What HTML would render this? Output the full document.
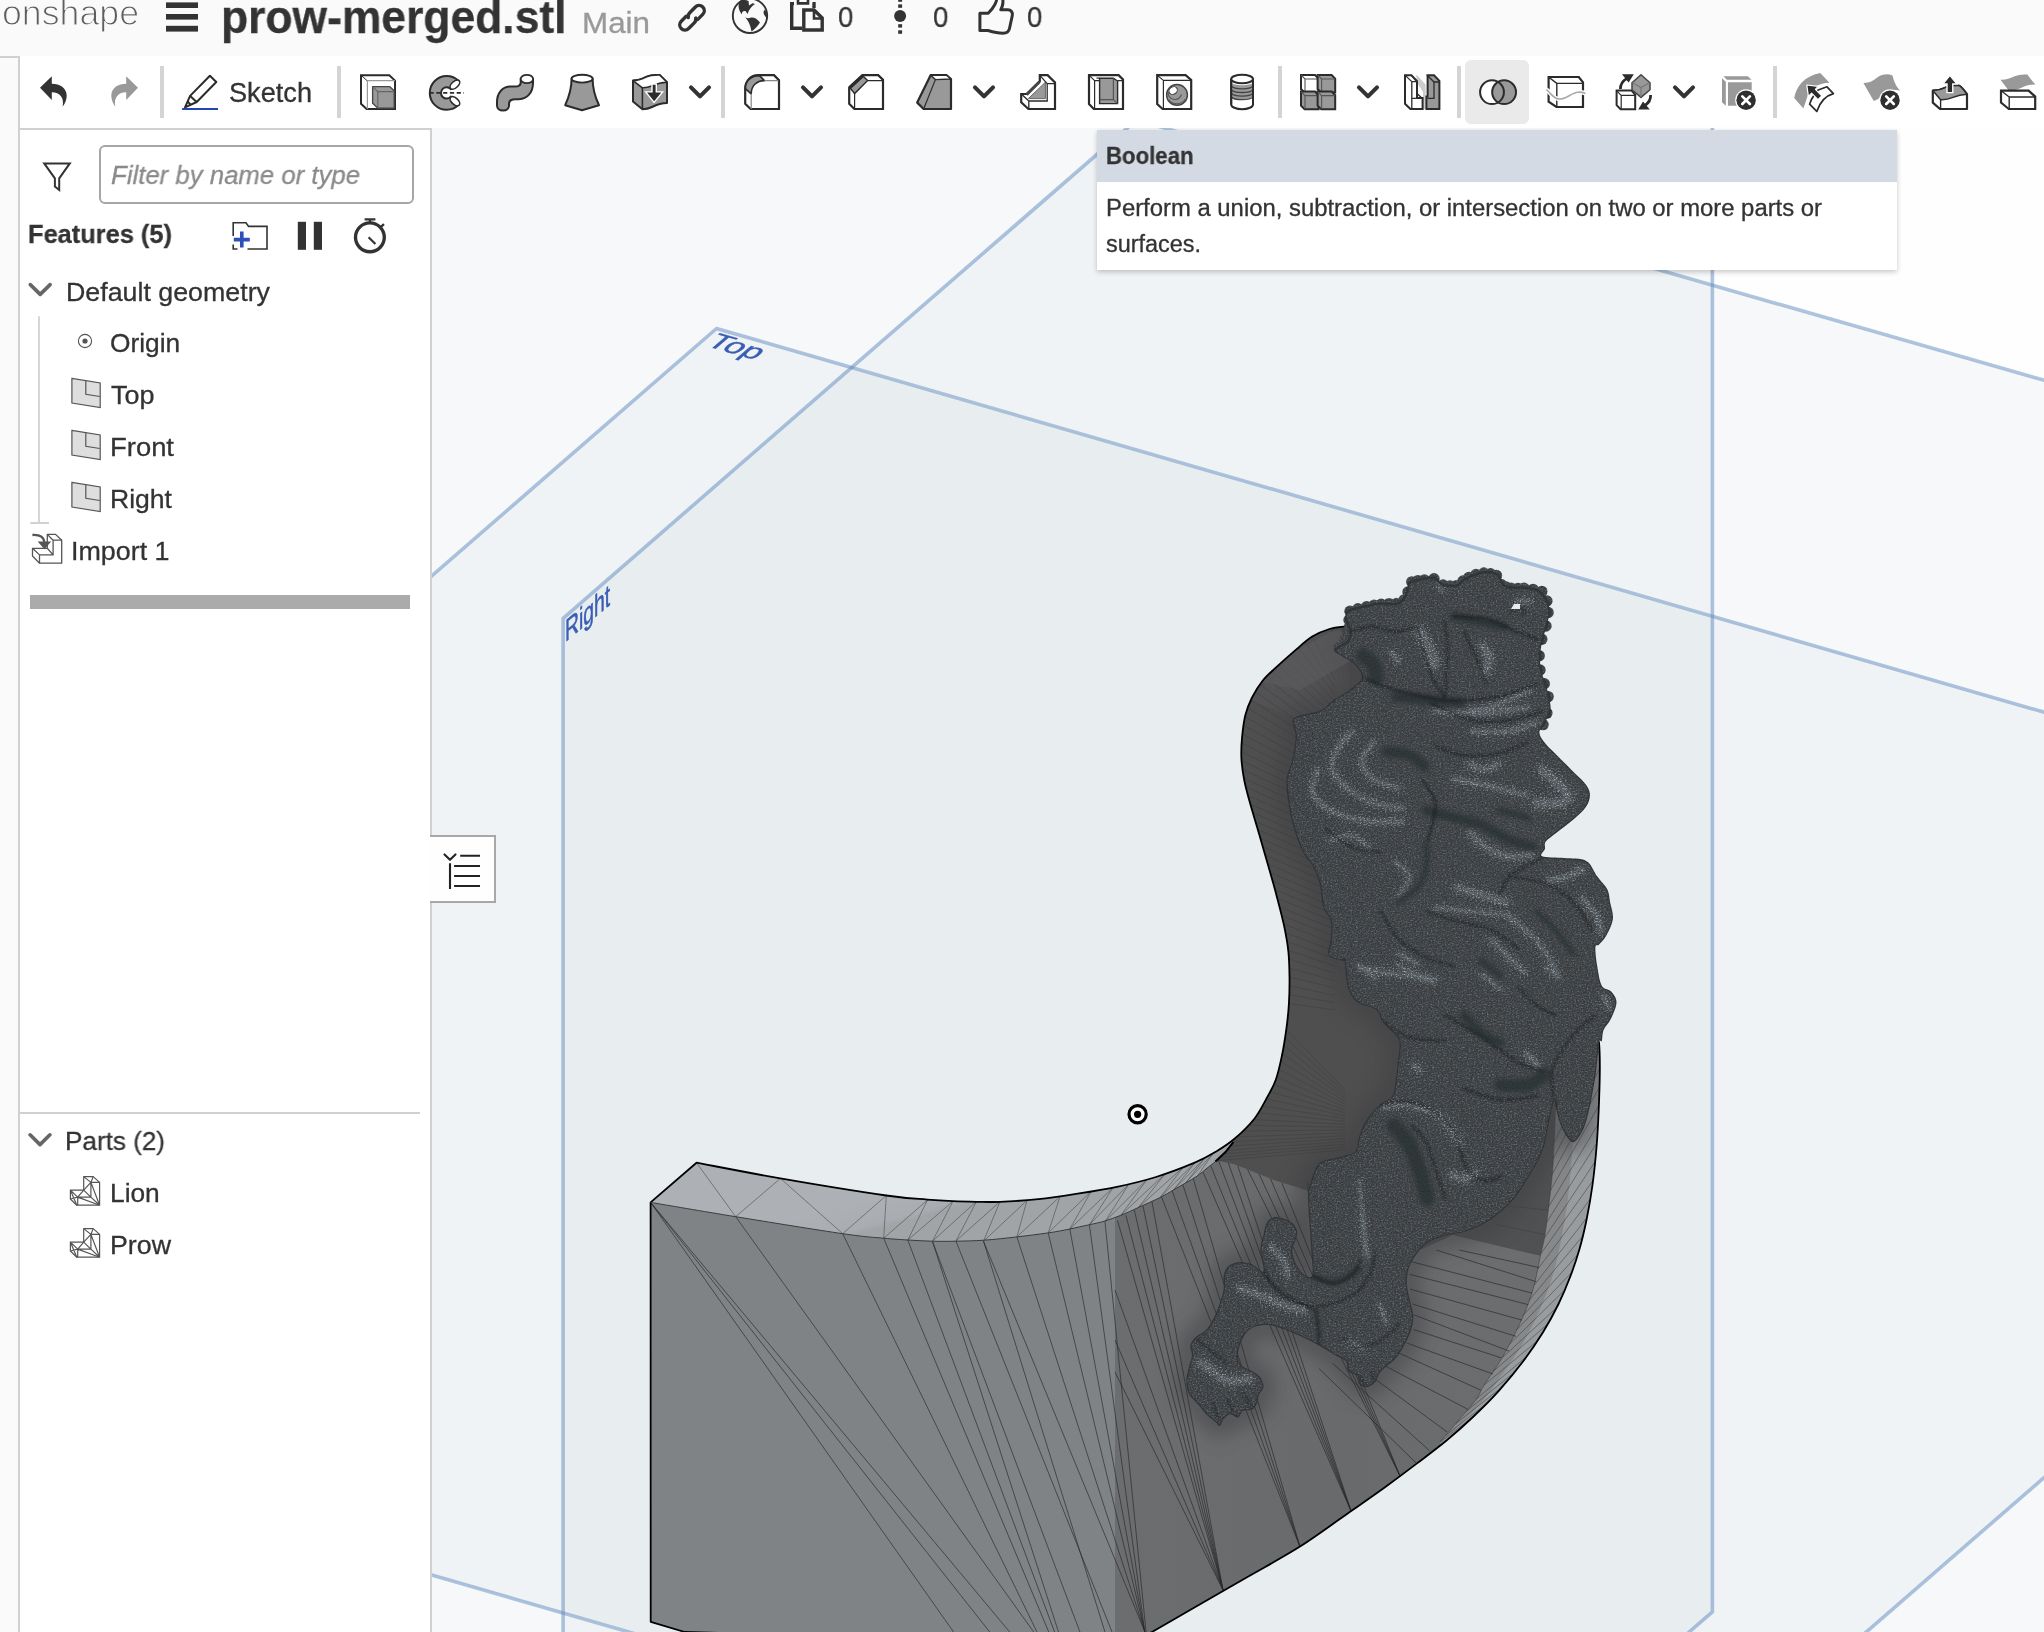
<!DOCTYPE html>
<html lang="en">
<head>
<meta charset="utf-8">
<title>prow-merged.stl - Onshape</title>
<style>
*{box-sizing:border-box;margin:0;padding:0}
html,body{width:2044px;height:1632px;overflow:hidden;background:#fafafa;font-family:"Liberation Sans",sans-serif}
.t{-webkit-text-stroke:0.3px currentColor;position:absolute;white-space:nowrap;transform-origin:0 0;display:block;will-change:transform}
svg{will-change:transform}
#hdr{position:absolute;left:0;top:0;width:2044px;height:56px;background:#fafafa;overflow:hidden}
#tb{position:absolute;left:0;top:56px;width:2044px;height:72px;background:#fff}
#tb .sep{position:absolute;top:10px;width:4px;height:52px;background:#d4d4d4}
#tb .hl{position:absolute;left:1465px;top:4px;width:64px;height:64px;border-radius:6px;background:#eaeaea}
#lstrip{position:absolute;left:0;top:56px;width:20px;height:1576px;background:#fafafa;border-right:2px solid #d0d0d0;border-top:2px solid #d0d0d0}
#panel{position:absolute;left:20px;top:128px;width:412px;height:1504px;background:#fff;border-top:2px solid #d0d0d0;border-right:2px solid #d0d0d0}
#canvas{position:absolute;left:432px;top:128px;width:1612px;height:1504px;background:#fefefe;overflow:hidden}
#canvas svg{position:absolute;left:-432px;top:-128px}
#tip{position:absolute;left:1097px;top:130px;width:800px;height:140px;background:#fff;box-shadow:0 2px 5px rgba(0,0,0,.22)}
#tip .h{position:absolute;left:0;top:0;width:800px;height:52px;background:#d3dae4}
#flt{position:absolute;left:98.5px;top:144.5px;width:315.5px;height:59px;border:2px solid #a6a6a6;border-radius:6px;background:#fff}
#bar{position:absolute;left:30px;top:595px;width:380px;height:14px;background:#ababab}
#psep{position:absolute;left:20px;top:1112px;width:400px;height:2px;background:#d0d0d0}
#tog{position:absolute;left:430px;top:835px;width:66px;height:68px;background:#fefefe;border:2px solid #a8a8a8;border-left:none}
.ic{position:absolute;overflow:visible}
</style>
</head>
<body>
<div id="canvas">
<svg width="2044" height="1632" viewBox="0 0 2044 1632">
<defs>
<linearGradient id="gtop" gradientUnits="userSpaceOnUse" x1="900" y1="1190" x2="915" y2="1245"><stop offset="0" stop-color="#adb1b6"/><stop offset="0.45" stop-color="#a9adb2"/><stop offset="0.55" stop-color="#a2a5a8"/><stop offset="1" stop-color="#a1a4a7"/></linearGradient>
<linearGradient id="gright" gradientUnits="userSpaceOnUse" x1="1115" y1="1300" x2="1560" y2="1300"><stop offset="0" stop-color="#6c6d6f"/><stop offset="0.5" stop-color="#696a6c"/><stop offset="1" stop-color="#6d6e70"/></linearGradient>
<filter id="b1" x="-30%" y="-30%" width="160%" height="160%"><feGaussianBlur stdDeviation="0.8"/></filter>
<filter id="b2" x="-30%" y="-30%" width="160%" height="160%"><feGaussianBlur stdDeviation="1.6"/></filter>
<filter id="b3" x="-30%" y="-30%" width="160%" height="160%"><feGaussianBlur stdDeviation="3"/></filter>
<filter id="b10" x="-30%" y="-30%" width="160%" height="160%"><feGaussianBlur stdDeviation="10"/></filter>
<filter id="b14" x="-30%" y="-30%" width="160%" height="160%"><feGaussianBlur stdDeviation="14"/></filter>
<filter id="nz" x="0" y="0" width="100%" height="100%" filterUnits="objectBoundingBox" color-interpolation-filters="sRGB"><feTurbulence type="fractalNoise" baseFrequency="0.55 0.7" numOctaves="2" seed="11" result="n"/><feColorMatrix in="n" type="matrix" values="0 0 0 0 0.68  0 0 0 0 0.72  0 0 0 0 0.75  3.0 0 0 0 -1.42"/></filter>
<filter id="nz2" x="0" y="0" width="100%" height="100%" filterUnits="objectBoundingBox" color-interpolation-filters="sRGB"><feTurbulence type="fractalNoise" baseFrequency="0.8" numOctaves="1" seed="4" result="n"/><feColorMatrix in="n" type="matrix" values="0 0 0 0 0.12  0 0 0 0 0.13  0 0 0 0 0.14  0 3.5 0 0 -1.55"/></filter>
<clipPath id="cprow"><path d="M650.6,1202.4L696.5,1162.7C710.5,1165.3 748.8,1172.9 780.4,1178.4C812.0,1183.9 861.8,1192.0 886.3,1195.5C910.8,1199.0 916.4,1198.6 927.5,1199.6C938.6,1200.5 944.8,1200.8 953.0,1201.2C961.2,1201.6 968.7,1201.7 976.5,1201.8C984.3,1201.9 989.7,1202.2 1000.0,1201.8C1010.3,1201.4 1025.5,1200.5 1038.4,1199.2C1051.3,1197.9 1064.5,1195.8 1077.6,1193.7C1090.7,1191.7 1103.8,1189.7 1116.9,1186.9C1130.0,1184.1 1142.9,1181.1 1156.0,1177.0C1169.1,1172.9 1185.1,1166.7 1195.3,1162.4C1205.5,1158.1 1210.5,1154.9 1217.0,1151.0C1223.5,1147.1 1228.3,1144.1 1234.5,1138.8C1240.7,1133.5 1248.8,1125.7 1254.0,1119.2C1259.2,1112.7 1262.3,1106.1 1265.9,1099.6C1269.5,1093.1 1273.0,1087.4 1275.7,1080.0C1278.4,1072.6 1280.2,1063.7 1282.0,1055.3C1283.8,1046.9 1285.1,1038.0 1286.3,1029.4C1287.5,1020.8 1288.4,1012.1 1288.9,1003.5C1289.4,994.9 1289.6,986.3 1289.5,977.7C1289.4,969.1 1289.3,960.4 1288.4,951.8C1287.5,943.2 1285.9,934.5 1284.1,925.9C1282.3,917.3 1279.5,907.0 1277.7,900.0C1275.9,893.0 1275.5,891.4 1273.3,883.6C1271.1,875.8 1267.4,862.8 1264.7,853.4C1262.0,844.0 1259.7,836.1 1257.2,827.5C1254.7,818.9 1251.8,809.5 1249.6,801.6C1247.4,793.7 1245.6,787.2 1244.2,780.0C1242.8,772.8 1241.8,765.6 1241.4,758.4C1241.1,751.2 1241.4,744.1 1242.1,736.9C1242.8,729.7 1243.7,721.8 1245.3,715.3C1246.9,708.8 1248.9,703.8 1251.8,698.0C1254.7,692.2 1258.6,685.8 1262.6,680.8C1266.5,675.8 1270.1,672.9 1275.5,667.9C1280.9,662.9 1288.8,655.8 1294.9,650.6C1301.0,645.4 1306.5,640.2 1312.2,636.6C1318.0,633.0 1323.7,630.7 1329.4,629.0C1335.2,627.3 1343.8,626.8 1346.7,626.4L1599.0,1042.4C1599.5,1047.4 1599.9,1061.3 1599.8,1072.6C1599.7,1083.9 1599.2,1097.9 1598.7,1110.0C1598.2,1122.1 1597.7,1132.5 1596.7,1145.0C1595.7,1157.5 1594.2,1172.5 1592.5,1185.0C1590.8,1197.5 1588.7,1209.3 1586.5,1220.0C1584.3,1230.7 1582.2,1239.7 1579.5,1249.0C1576.8,1258.3 1574.0,1266.8 1570.5,1276.0C1567.0,1285.2 1563.1,1294.6 1558.5,1304.0C1553.9,1313.4 1548.9,1322.7 1543.0,1332.3C1537.1,1341.9 1530.3,1351.8 1523.0,1361.5C1515.7,1371.2 1507.2,1381.4 1499.0,1390.6C1490.8,1399.8 1482.2,1408.2 1473.5,1416.5C1464.8,1424.8 1455.9,1432.7 1446.5,1440.5C1437.1,1448.3 1427.2,1455.6 1417.0,1463.4C1406.8,1471.2 1395.7,1479.5 1385.0,1487.2C1374.3,1494.9 1367.2,1499.8 1353.0,1509.7C1338.8,1519.6 1317.7,1535.3 1300.0,1546.6C1282.3,1557.8 1264.7,1567.0 1247.0,1577.2C1229.3,1587.4 1209.8,1598.7 1194.0,1607.8C1178.2,1616.9 1162.5,1626.0 1152.0,1632.0C1141.5,1638.0 1134.5,1642.1 1131.0,1644.1L684.8,1632.0L650.7,1621.8Z"/></clipPath>
<clipPath id="clion"><path d="M1345.5,614.7C1346.0,612.8 1346.5,611.5 1350.0,610.0C1353.5,608.5 1361.3,607.1 1366.5,606.0C1371.7,604.9 1376.0,603.9 1381.2,603.5C1386.5,603.1 1393.9,604.8 1398.0,603.5C1402.1,602.2 1404.2,598.8 1406.0,595.5C1407.8,592.2 1407.0,586.1 1409.0,583.5C1411.0,580.9 1413.8,580.9 1418.0,580.0C1422.2,579.1 1429.8,577.2 1434.0,578.0C1438.2,578.8 1439.3,583.2 1443.0,584.5C1446.7,585.8 1452.6,586.5 1456.4,585.5C1460.2,584.5 1461.4,580.7 1466.0,578.5C1470.6,576.3 1478.5,573.0 1483.8,572.3C1489.0,571.6 1494.3,572.5 1497.5,574.5C1500.7,576.5 1500.7,582.3 1503.0,584.5C1505.3,586.7 1507.7,587.2 1511.2,587.7C1514.7,588.2 1519.4,587.2 1524.0,587.7C1528.6,588.2 1534.9,588.4 1538.8,590.9C1542.7,593.4 1545.7,598.9 1547.5,602.5C1549.3,606.1 1549.8,608.2 1549.5,612.5C1549.2,616.8 1547.2,623.4 1546.0,628.0C1544.8,632.6 1543.5,635.3 1542.5,640.0C1541.5,644.7 1540.2,651.0 1540.0,656.0C1539.8,661.0 1540.1,665.3 1541.0,670.0C1541.9,674.7 1544.2,679.5 1545.5,684.0C1546.8,688.5 1548.2,692.5 1549.0,697.0C1549.8,701.5 1551.2,706.5 1550.4,711.0C1549.5,715.5 1545.8,720.2 1543.9,723.9C1542.1,727.6 1539.0,729.7 1539.4,733.1C1539.7,736.5 1542.9,740.4 1545.8,744.1C1548.7,747.8 1552.5,750.9 1556.8,755.2C1561.1,759.4 1566.9,765.3 1571.5,769.9C1576.1,774.5 1581.3,778.8 1584.4,782.7C1587.5,786.7 1589.6,789.8 1589.9,793.8C1590.2,797.8 1589.0,802.3 1586.2,806.6C1583.5,810.9 1578.3,815.2 1573.4,819.5C1568.5,823.8 1561.4,828.7 1556.8,832.4C1552.2,836.1 1547.8,838.8 1545.8,841.6C1543.8,844.3 1545.5,846.5 1544.9,848.9C1544.3,851.4 1538.9,854.7 1542.1,856.3C1545.3,857.8 1556.8,857.4 1564.2,858.1C1571.5,858.9 1580.7,857.8 1586.2,860.9C1591.8,863.9 1593.7,871.8 1597.3,876.5C1600.8,881.3 1605.2,885.1 1607.4,889.4C1609.5,893.7 1609.2,897.3 1610.1,902.2C1611.1,907.1 1613.5,913.3 1612.9,918.8C1612.3,924.3 1608.8,931.0 1606.5,935.3C1604.2,939.6 1600.9,942.5 1599.1,944.5C1597.3,946.5 1595.7,943.6 1595.4,947.3C1595.1,951.0 1596.2,960.2 1597.3,966.6C1598.3,973.0 1599.5,981.6 1601.8,985.7C1604.0,989.9 1608.5,988.5 1610.9,991.3C1613.4,994.0 1616.5,997.7 1616.5,1002.3C1616.5,1006.9 1613.1,1014.2 1610.9,1018.8C1608.8,1023.4 1605.1,1026.2 1603.6,1029.9C1602.1,1033.5 1602.5,1038.8 1601.8,1040.9C1601.0,1043.0 1599.9,1037.8 1599.0,1042.7C1598.1,1047.6 1597.3,1062.0 1596.2,1070.3C1595.2,1078.6 1593.8,1085.6 1592.6,1092.4C1591.3,1099.1 1590.4,1104.6 1588.9,1110.8C1587.3,1116.9 1585.8,1123.9 1583.4,1129.1C1580.9,1134.4 1576.9,1140.8 1574.2,1142.0C1571.4,1143.2 1569.3,1139.9 1566.8,1136.5C1564.4,1133.1 1561.3,1126.7 1559.5,1121.8C1557.6,1116.9 1556.7,1110.5 1555.8,1107.1C1554.9,1103.7 1555.2,1098.5 1553.9,1101.6C1552.7,1104.6 1550.0,1118.4 1548.4,1125.5C1546.9,1132.5 1546.6,1137.7 1544.8,1143.9C1542.9,1150.0 1540.5,1156.1 1537.4,1162.2C1534.3,1168.4 1530.0,1174.8 1526.4,1180.6C1522.7,1186.5 1519.6,1192.0 1515.3,1197.2C1511.0,1202.4 1506.1,1207.3 1500.6,1211.9C1495.1,1216.5 1488.4,1221.4 1482.2,1224.8C1476.1,1228.1 1470.0,1230.3 1463.9,1232.1C1457.7,1233.9 1451.6,1233.9 1445.5,1235.8C1439.3,1237.6 1432.2,1239.7 1427.1,1243.1C1422.0,1246.6 1418.0,1252.1 1414.9,1256.5C1411.8,1260.8 1409.9,1264.4 1408.5,1269.2C1407.2,1274.0 1406.7,1279.8 1406.9,1285.1C1407.2,1290.5 1409.1,1295.8 1410.1,1301.1C1411.2,1306.4 1413.3,1311.7 1413.3,1317.0C1413.3,1322.3 1412.0,1327.6 1410.1,1332.9C1408.3,1338.2 1404.8,1344.4 1402.2,1348.9C1399.5,1353.4 1396.8,1357.1 1394.2,1360.0C1391.5,1362.9 1388.6,1364.3 1386.2,1366.4C1383.8,1368.5 1381.7,1370.1 1379.9,1372.8C1378.0,1375.4 1377.2,1379.9 1375.1,1382.3C1372.9,1384.7 1369.8,1386.8 1367.1,1387.1C1364.5,1387.4 1360.7,1385.8 1359.1,1383.9C1357.5,1382.1 1359.4,1378.1 1357.5,1376.0C1355.7,1373.8 1349.8,1373.6 1348.0,1371.2C1346.1,1368.8 1348.5,1364.3 1346.4,1361.6C1344.3,1359.0 1339.8,1357.9 1335.2,1355.2C1330.7,1352.6 1325.2,1348.9 1319.3,1345.7C1313.5,1342.5 1306.6,1339.0 1300.2,1336.1C1293.8,1333.2 1286.4,1330.0 1281.1,1328.2C1275.8,1326.3 1272.6,1325.2 1268.3,1325.0C1264.1,1324.7 1259.3,1325.2 1255.6,1326.6C1251.9,1327.9 1248.7,1329.8 1246.0,1332.9C1243.4,1336.1 1241.0,1341.4 1239.7,1345.7C1238.3,1349.9 1237.5,1355.0 1238.1,1358.4C1238.6,1361.9 1240.5,1364.3 1242.8,1366.4C1245.2,1368.5 1249.5,1369.3 1252.4,1371.2C1255.3,1373.0 1258.5,1374.9 1260.4,1377.5C1262.2,1380.2 1263.8,1384.2 1263.6,1387.1C1263.3,1390.0 1259.8,1392.4 1258.8,1395.1C1257.7,1397.7 1258.2,1400.6 1257.2,1403.0C1256.1,1405.4 1254.8,1408.1 1252.4,1409.4C1250.0,1410.7 1245.2,1409.7 1242.8,1411.0C1240.5,1412.3 1240.2,1416.8 1238.1,1417.4C1235.9,1417.9 1232.5,1413.9 1230.1,1414.2C1227.7,1414.5 1225.5,1417.0 1223.7,1419.0C1222.0,1421.0 1221.1,1425.6 1219.7,1426.1C1218.4,1426.7 1218.0,1424.1 1215.8,1422.2C1213.5,1420.2 1209.1,1417.1 1206.2,1414.2C1203.3,1411.3 1201.2,1408.1 1198.2,1404.6C1195.3,1401.2 1190.7,1397.5 1188.7,1393.5C1186.7,1389.5 1186.3,1385.0 1186.3,1380.7C1186.3,1376.5 1187.7,1372.2 1188.7,1368.0C1189.6,1363.7 1191.6,1359.0 1191.9,1355.2C1192.1,1351.5 1189.7,1348.6 1190.3,1345.7C1190.8,1342.8 1192.4,1340.4 1195.0,1337.7C1197.7,1335.1 1203.0,1333.2 1206.2,1329.8C1209.4,1326.3 1211.8,1321.8 1214.2,1317.0C1216.6,1312.2 1218.9,1305.9 1220.5,1301.1C1222.1,1296.3 1223.2,1292.6 1223.7,1288.3C1224.3,1284.1 1222.9,1279.3 1223.7,1275.6C1224.5,1271.9 1225.8,1268.3 1228.5,1266.0C1231.2,1263.8 1235.7,1262.3 1239.7,1262.0C1243.6,1261.8 1248.7,1262.8 1252.4,1264.4C1256.1,1266.0 1260.1,1270.8 1262.0,1271.6C1263.8,1272.4 1263.6,1271.2 1263.6,1269.2C1263.6,1267.2 1262.5,1263.1 1262.0,1259.7C1261.4,1256.2 1260.1,1252.8 1260.4,1248.5C1260.6,1244.3 1262.5,1238.4 1263.6,1234.2C1264.6,1229.9 1265.1,1225.8 1266.7,1223.0C1268.3,1220.2 1270.5,1218.2 1273.1,1217.4C1275.8,1216.6 1279.5,1217.3 1282.7,1218.2C1285.9,1219.2 1289.8,1220.9 1292.2,1223.0C1294.6,1225.1 1296.5,1228.1 1297.0,1231.0C1297.5,1233.9 1296.2,1237.4 1295.4,1240.5C1294.6,1243.7 1292.2,1246.4 1292.2,1250.1C1292.2,1253.8 1293.6,1258.9 1295.4,1262.8C1297.3,1266.8 1300.6,1271.9 1303.4,1274.0C1306.2,1276.1 1310.8,1279.3 1312.1,1275.6C1313.5,1271.9 1311.7,1259.7 1311.3,1251.7C1310.9,1243.7 1310.3,1235.8 1309.8,1227.8C1309.2,1219.8 1308.4,1211.9 1308.2,1203.9C1307.9,1195.9 1308.3,1182.0 1308.2,1180.0C1308.1,1178.0 1306.8,1192.5 1307.6,1191.7C1308.4,1190.8 1310.9,1180.0 1313.1,1175.1C1315.2,1170.2 1315.9,1165.3 1320.4,1162.2C1325.0,1159.2 1334.9,1158.6 1340.7,1156.7C1346.5,1154.9 1352.3,1154.6 1355.4,1151.2C1358.4,1147.8 1357.2,1141.7 1359.1,1136.5C1360.9,1131.3 1363.0,1125.2 1366.4,1120.0C1369.8,1114.7 1375.0,1109.2 1379.3,1105.2C1383.6,1101.3 1389.4,1100.3 1392.2,1096.1C1394.9,1091.8 1394.9,1085.0 1395.8,1079.5C1396.7,1074.0 1397.1,1069.1 1397.7,1063.0C1398.3,1056.8 1400.1,1047.6 1399.5,1042.7C1398.9,1037.8 1396.7,1036.9 1394.0,1033.5C1391.2,1030.2 1386.0,1026.5 1383.0,1022.5C1379.9,1018.5 1379.9,1013.0 1375.6,1009.6C1371.3,1006.3 1361.8,1006.0 1357.2,1002.3C1352.6,998.6 1350.2,994.6 1348.0,987.6C1345.9,980.5 1345.1,964.4 1344.4,960.0C1343.6,955.6 1346.1,961.8 1343.5,961.1C1341.0,960.3 1331.0,959.2 1328.8,955.6C1326.7,951.9 1330.4,944.8 1330.7,939.0C1331.0,933.2 1331.9,925.8 1330.7,920.6C1329.4,915.4 1325.2,913.9 1323.3,907.8C1321.5,901.6 1321.5,890.9 1319.6,883.9C1317.8,876.8 1315.0,870.7 1312.3,865.5C1309.5,860.3 1306.2,858.7 1303.1,852.6C1300.0,846.5 1296.4,837.0 1293.9,828.7C1291.5,820.4 1289.6,811.2 1288.4,803.0C1287.2,794.7 1285.9,786.1 1286.5,779.1C1287.2,772.0 1290.5,767.7 1292.1,760.7C1293.6,753.6 1295.4,743.8 1295.7,736.8C1296.0,729.7 1289.9,722.7 1293.9,718.4C1297.9,714.0 1313.5,713.6 1320.0,710.6C1326.5,707.6 1328.5,703.4 1332.7,700.4C1337.0,697.4 1341.7,695.2 1345.5,692.7C1349.3,690.2 1353.0,687.6 1355.7,685.1C1358.5,682.6 1361.6,680.3 1362.0,677.5C1362.4,674.7 1359.9,671.0 1358.2,668.5C1356.5,666.0 1354.4,664.1 1351.9,662.2C1349.4,660.3 1345.8,658.9 1343.0,657.0C1340.2,655.1 1336.0,652.4 1335.3,650.7C1334.6,649.0 1337.0,648.4 1339.1,646.9C1341.2,645.4 1346.1,644.3 1348.0,641.8C1349.9,639.2 1350.8,635.0 1350.6,631.6C1350.4,628.2 1347.6,624.2 1346.8,621.4C1346.0,618.6 1345.0,616.6 1345.5,614.7Z"/><circle cx="1350" cy="611.2" r="5.7"/><circle cx="1358" cy="608.8" r="5.7"/><circle cx="1366.5" cy="606.7" r="5.7"/><circle cx="1374" cy="605.2" r="5.7"/><circle cx="1381.2" cy="604.2" r="5.7"/><circle cx="1389" cy="603.6" r="5.7"/><circle cx="1396.5" cy="603.5" r="5.7"/><circle cx="1404" cy="600" r="5.7"/><circle cx="1408" cy="592" r="5.7"/><circle cx="1411.8" cy="581.9" r="5.7"/><circle cx="1418" cy="580.6" r="5.7"/><circle cx="1424.5" cy="580" r="5.7"/><circle cx="1434" cy="578.7" r="5.7"/><circle cx="1443" cy="585" r="5.7"/><circle cx="1450" cy="586" r="5.7"/><circle cx="1456.4" cy="585.7" r="5.7"/><circle cx="1463" cy="581" r="5.7"/><circle cx="1469" cy="577.4" r="5.7"/><circle cx="1476" cy="574.5" r="5.7"/><circle cx="1483.8" cy="573" r="5.7"/><circle cx="1490.5" cy="573.8" r="5.7"/><circle cx="1496.5" cy="575.5" r="5.7"/><circle cx="1501" cy="584.4" r="5.7"/><circle cx="1506" cy="587" r="5.7"/><circle cx="1511.2" cy="588.2" r="5.7"/><circle cx="1518" cy="588.4" r="5.7"/><circle cx="1524" cy="588.2" r="5.7"/><circle cx="1533" cy="589.4" r="5.7"/><circle cx="1541.8" cy="591.4" r="5.7"/><circle cx="1546.9" cy="601" r="5.7"/><circle cx="1548.1" cy="612.5" r="5.7"/><circle cx="1546" cy="626" r="5.7"/><circle cx="1541.8" cy="639.2" r="5.7"/><circle cx="1539.2" cy="655.8" r="5.7"/><circle cx="1540" cy="670" r="5.7"/><circle cx="1544.3" cy="683.8" r="5.7"/><circle cx="1548.1" cy="696.6" r="5.7"/><circle cx="1546.9" cy="713.1" r="5.7"/><circle cx="1543" cy="724.6" r="5.7"/><circle cx="1339" cy="648" r="5.7"/><circle cx="1345" cy="640" r="5.7"/><circle cx="1349" cy="620" r="5.7"/><circle cx="1349.5" cy="627" r="5.7"/><circle cx="1347" cy="632" r="5.7"/></clipPath>
<mask id="mhi" maskUnits="userSpaceOnUse" x="1150" y="540" width="500" height="920"><rect x="1150" y="540" width="500" height="920" fill="#585858"/><g filter="url(#b3)" fill="none" stroke="#fff" stroke-linecap="round"><path d="M1352.7,731.3C1350.3,734.0 1341.4,741.4 1338.0,747.8C1334.7,754.2 1331.0,763.1 1332.5,769.9C1334.0,776.6 1340.5,782.7 1347.2,788.3C1354.0,793.8 1363.8,799.6 1373.0,803.0C1382.2,806.3 1397.5,807.6 1402.4,808.5" stroke-width="8"/><path d="M1373.0,742.3C1371.1,745.4 1361.9,754.5 1361.9,760.7C1361.9,766.8 1366.8,774.5 1373.0,779.1C1379.1,783.7 1394.4,786.7 1398.7,788.3" stroke-width="8"/><path d="M1317.8,769.9C1316.9,773.5 1310.1,785.2 1312.3,791.9C1314.4,798.7 1321.8,805.4 1330.7,810.3C1339.6,815.2 1353.7,819.5 1365.6,821.3C1377.6,823.2 1396.2,821.3 1402.4,821.3" stroke-width="8"/><path d="M1330.7,839.7C1334.4,839.1 1346.3,834.8 1352.7,836.1C1359.2,837.3 1366.5,845.2 1369.3,847.1" stroke-width="6.4"/><path d="M1395.0,861.8C1397.5,864.2 1409.1,871.0 1409.7,876.5C1410.3,882.0 1400.5,891.8 1398.7,894.9" stroke-width="6.4"/><path d="M1358.3,966.6C1361.9,967.5 1371.7,970.6 1380.3,972.1C1388.9,973.6 1400.5,974.6 1409.7,975.8C1418.9,977.0 1431.2,978.9 1435.5,979.5" stroke-width="8"/><path d="M1398.7,953.7C1401.8,955.6 1414.0,962.9 1417.1,964.8" stroke-width="6.4"/><path d="M1470.4,764.4C1472.5,765.3 1478.7,769.9 1483.3,769.9C1487.9,769.9 1495.5,765.3 1498.0,764.4" stroke-width="9.6"/><path d="M1542.1,769.9C1544.6,772.0 1552.5,778.4 1556.8,782.7C1561.1,787.0 1567.2,792.2 1567.8,795.6C1568.5,799.0 1565.7,801.7 1560.5,803.0C1555.3,804.2 1540.6,803.0 1536.6,803.0" stroke-width="14.4"/><path d="M1453.9,779.1C1460.0,780.3 1478.4,783.7 1490.6,786.4C1502.9,789.2 1521.3,794.1 1527.4,795.6" stroke-width="8"/><path d="M1470.4,832.4C1472.5,834.5 1477.5,841.3 1483.3,845.2C1489.1,849.2 1497.4,854.7 1505.3,856.3C1513.3,857.8 1526.8,854.7 1531.1,854.4" stroke-width="9.6"/><path d="M1435.5,711.0C1443.1,711.3 1466.1,713.5 1481.4,712.9C1496.8,712.3 1519.7,708.3 1527.4,707.4" stroke-width="8"/><path d="M1472.2,731.3C1478.4,731.3 1498.3,732.8 1509.0,731.3C1519.7,729.7 1532.0,723.6 1536.6,722.1" stroke-width="8"/><path d="M1457.5,887.5C1461.5,888.8 1473.5,892.4 1481.4,894.9C1489.4,897.3 1501.4,901.0 1505.3,902.2" stroke-width="11.2"/><path d="M1509.0,917.0C1512.7,920.0 1524.9,929.2 1531.1,935.3C1537.2,941.5 1541.5,947.6 1545.8,953.7C1550.1,959.9 1555.0,969.0 1556.8,972.1" stroke-width="8"/><path d="M1490.6,939.0C1493.7,942.1 1503.5,951.9 1509.0,957.4C1514.5,962.9 1521.3,969.7 1523.7,972.1" stroke-width="8"/><path d="M1435.5,907.8C1441.6,908.4 1460.0,910.2 1472.2,911.4C1484.5,912.7 1502.9,914.5 1509.0,915.1" stroke-width="6.4"/><path d="M1549.5,880.2C1552.5,879.6 1562.3,878.3 1567.8,876.5C1573.4,874.7 1580.1,870.4 1582.6,869.1" stroke-width="9.6"/><path d="M1582.6,898.6C1585.0,901.6 1594.2,911.4 1597.3,917.0C1600.3,922.5 1600.3,929.2 1600.9,931.7" stroke-width="9.6"/><path d="M1440.0,1116.3C1441.8,1118.4 1447.6,1124.6 1451.0,1129.1C1454.4,1133.7 1458.6,1141.4 1460.2,1143.9" stroke-width="9.6"/><path d="M1452.8,1175.1C1454.7,1175.7 1460.2,1179.1 1463.9,1178.8C1467.5,1178.5 1473.1,1174.2 1474.9,1173.3" stroke-width="11.2"/><path d="M1412.4,1064.8C1413.6,1065.7 1418.5,1069.4 1419.7,1070.3" stroke-width="8"/><path d="M1526.4,1053.8C1528.2,1055.6 1535.6,1063.0 1537.4,1064.8" stroke-width="9.6"/><path d="M1360.9,967.4C1363.3,969.2 1373.2,976.5 1375.6,978.4" stroke-width="6.4"/><path d="M1397.7,965.5C1400.1,966.7 1406.9,970.1 1412.4,972.9C1417.9,975.6 1427.7,980.5 1430.8,982.1" stroke-width="6.4"/><path d="M1482.2,974.7C1485.3,977.2 1497.6,987.0 1500.6,989.4" stroke-width="6.4"/><path d="M1546.6,967.4C1548.7,969.2 1557.3,976.5 1559.5,978.4" stroke-width="6.4"/><path d="M1603.6,996.8C1604.5,998.6 1608.2,1006.0 1609.1,1007.8" stroke-width="8"/><path d="M1383.0,1107.1C1387.3,1106.8 1400.1,1104.3 1408.7,1105.2C1417.3,1106.2 1430.2,1111.4 1434.4,1112.6" stroke-width="8"/><path d="M1359.1,1180.6C1359.7,1186.8 1361.5,1205.1 1362.7,1217.4C1364.0,1229.7 1365.8,1248.0 1366.4,1254.2" stroke-width="4.8"/><path d="M1271.5,1246.9C1273.6,1249.6 1281.6,1258.1 1284.3,1262.8C1286.9,1267.6 1286.9,1273.5 1287.4,1275.6" stroke-width="9.6"/><path d="M1239.7,1288.3C1242.8,1289.4 1251.9,1292.0 1258.8,1294.7C1265.7,1297.4 1273.6,1301.6 1281.1,1304.3C1288.5,1306.9 1299.7,1309.6 1303.4,1310.6" stroke-width="11.2"/><path d="M1201.4,1363.2C1203.3,1364.5 1208.3,1368.3 1212.6,1371.2C1216.8,1374.1 1220.8,1379.4 1226.9,1380.7C1233.0,1382.1 1245.5,1379.4 1249.2,1379.1" stroke-width="12.8"/><path d="M1362.3,1216.6C1362.9,1221.2 1364.7,1237.1 1365.5,1243.7C1366.3,1250.4 1366.8,1254.3 1367.1,1256.5" stroke-width="6.4"/><path d="M1379.9,1304.3C1380.9,1307.4 1385.2,1320.2 1386.2,1323.4" stroke-width="6.4"/><path d="M1348.0,1342.5C1350.6,1343.6 1361.3,1347.8 1363.9,1348.9" stroke-width="6.4"/><path d="M1419.4,631.6C1420.9,634.1 1425.8,641.3 1428.3,646.9C1430.9,652.4 1433.6,661.7 1434.7,664.7" stroke-width="16"/><path d="M1483.1,646.9C1484.2,648.8 1489.1,654.3 1489.5,658.3C1489.9,662.4 1486.3,669.0 1485.7,671.1" stroke-width="12.8"/><path d="M1470.4,710.6C1474.0,710.0 1484.8,708.9 1492.1,706.8C1499.3,704.6 1507.4,700.6 1513.7,697.8C1520.1,695.1 1527.5,691.5 1530.3,690.2" stroke-width="8"/><path d="M1391.4,652.0C1392.6,653.7 1397.7,660.5 1399.0,662.2" stroke-width="8"/><path d="M1517.6,601.0C1519.7,601.0 1528.2,601.0 1530.3,601.0" stroke-width="8"/><path d="M1438.5,587.0C1439.2,587.6 1441.7,590.1 1442.4,590.8" stroke-width="6.4"/></g><g filter="url(#b3)" fill="none" stroke="#000" stroke-linecap="round"><path d="M1387.7,751.5C1391.3,752.1 1403.6,752.7 1409.7,755.2C1415.9,757.6 1422.0,764.4 1424.4,766.2" stroke-width="13"/><path d="M1426.3,810.3C1430.9,811.5 1444.7,815.2 1453.9,817.7C1463.1,820.1 1472.2,821.3 1481.4,825.0C1490.6,828.7 1500.4,836.1 1509.0,839.7C1517.6,843.4 1528.9,845.9 1532.9,847.1" stroke-width="11.7"/><path d="M1499.8,810.3C1504.4,811.5 1522.8,816.4 1527.4,817.7" stroke-width="7.8"/><path d="M1426.3,843.4C1426.3,847.1 1427.2,858.7 1426.3,865.5C1425.4,872.2 1425.4,877.7 1420.8,883.9C1416.2,890.0 1402.4,899.2 1398.7,902.2" stroke-width="6.5"/><path d="M1536.6,911.4C1539.7,914.5 1548.9,922.8 1555.0,929.8C1561.1,936.9 1570.3,949.7 1573.4,953.7" stroke-width="6.5"/><path d="M1481.4,961.1C1484.5,963.5 1496.8,973.3 1499.8,975.8" stroke-width="7.8"/><path d="M1500.6,1085.0C1505.2,1085.0 1520.9,1086.9 1528.2,1085.0C1535.6,1083.2 1542.0,1075.8 1544.8,1074.0" stroke-width="15.6"/><path d="M1394.0,1125.5C1396.4,1128.5 1404.4,1136.2 1408.7,1143.9C1413.0,1151.5 1416.7,1162.2 1419.7,1171.4C1422.8,1180.6 1425.9,1194.4 1427.1,1199.0" stroke-width="18.2"/><path d="M1463.9,1015.2C1466.9,1018.2 1476.1,1028.9 1482.2,1033.5C1488.4,1038.1 1497.6,1041.2 1500.6,1042.7" stroke-width="10.4"/><path d="M1316.1,1310.6C1316.7,1315.4 1318.8,1334.5 1319.3,1339.3" stroke-width="3.9"/><path d="M1311.3,1275.6C1315.3,1276.6 1327.3,1283.0 1335.2,1282.0C1343.2,1280.9 1355.2,1271.3 1359.1,1269.2" stroke-width="7.8"/><path d="M1363.3,655.8C1365.0,657.3 1371.4,661.1 1373.5,664.7C1375.7,668.3 1375.7,675.3 1376.1,677.5" stroke-width="18.2"/><path d="M1453.8,616.3C1458.1,617.1 1470.8,619.7 1479.3,621.4C1487.8,623.1 1500.6,625.6 1504.8,626.5" stroke-width="10.4"/><path d="M1396.5,696.6C1402.8,697.2 1424.1,699.3 1434.7,700.4C1445.3,701.5 1456.0,702.5 1460.2,702.9" stroke-width="13"/></g></mask>
</defs>
<g fill="#a5b9c9" fill-opacity="0.09" stroke="#5f89c0" stroke-opacity="0.5" stroke-width="3.6" stroke-linejoin="round">
<polygon points="143,-165 2131,405.2 2131,2398 143,1827"/>
<polygon points="716.5,328.5 2705,903.2 1557.5,1900.4 -431,1325.7"/>
<polygon points="563.1,618.3 1712.4,-380.4 1712.4,1611.9 563.1,2610.6"/>
</g>
<g font-family="'Liberation Sans',sans-serif" fill="#3a5db5" stroke="#3a5db5" stroke-width="0.5">
<text transform="matrix(1.0,0.285,-0.68,0.58,704.5,345.5)" font-size="31.5">Top</text>
<text transform="matrix(0.73,-0.61,0,1.17,565,642.5)" font-size="26.5">Right</text>
</g>
<g id="model">
<path d="M650.6,1202.4L696.5,1162.7C710.5,1165.3 748.8,1172.9 780.4,1178.4C812.0,1183.9 861.8,1192.0 886.3,1195.5C910.8,1199.0 916.4,1198.6 927.5,1199.6C938.6,1200.5 944.8,1200.8 953.0,1201.2C961.2,1201.6 968.7,1201.7 976.5,1201.8C984.3,1201.9 989.7,1202.2 1000.0,1201.8C1010.3,1201.4 1025.5,1200.5 1038.4,1199.2C1051.3,1197.9 1064.5,1195.8 1077.6,1193.7C1090.7,1191.7 1103.8,1189.7 1116.9,1186.9C1130.0,1184.1 1142.9,1181.1 1156.0,1177.0C1169.1,1172.9 1185.1,1166.7 1195.3,1162.4C1205.5,1158.1 1210.5,1154.9 1217.0,1151.0C1223.5,1147.1 1228.3,1144.1 1234.5,1138.8C1240.7,1133.5 1248.8,1125.7 1254.0,1119.2C1259.2,1112.7 1262.3,1106.1 1265.9,1099.6C1269.5,1093.1 1273.0,1087.4 1275.7,1080.0C1278.4,1072.6 1280.2,1063.7 1282.0,1055.3C1283.8,1046.9 1285.1,1038.0 1286.3,1029.4C1287.5,1020.8 1288.4,1012.1 1288.9,1003.5C1289.4,994.9 1289.6,986.3 1289.5,977.7C1289.4,969.1 1289.3,960.4 1288.4,951.8C1287.5,943.2 1285.9,934.5 1284.1,925.9C1282.3,917.3 1279.5,907.0 1277.7,900.0C1275.9,893.0 1275.5,891.4 1273.3,883.6C1271.1,875.8 1267.4,862.8 1264.7,853.4C1262.0,844.0 1259.7,836.1 1257.2,827.5C1254.7,818.9 1251.8,809.5 1249.6,801.6C1247.4,793.7 1245.6,787.2 1244.2,780.0C1242.8,772.8 1241.8,765.6 1241.4,758.4C1241.1,751.2 1241.4,744.1 1242.1,736.9C1242.8,729.7 1243.7,721.8 1245.3,715.3C1246.9,708.8 1248.9,703.8 1251.8,698.0C1254.7,692.2 1258.6,685.8 1262.6,680.8C1266.5,675.8 1270.1,672.9 1275.5,667.9C1280.9,662.9 1288.8,655.8 1294.9,650.6C1301.0,645.4 1306.5,640.2 1312.2,636.6C1318.0,633.0 1323.7,630.7 1329.4,629.0C1335.2,627.3 1343.8,626.8 1346.7,626.4L1599.0,1042.4C1599.5,1047.4 1599.9,1061.3 1599.8,1072.6C1599.7,1083.9 1599.2,1097.9 1598.7,1110.0C1598.2,1122.1 1597.7,1132.5 1596.7,1145.0C1595.7,1157.5 1594.2,1172.5 1592.5,1185.0C1590.8,1197.5 1588.7,1209.3 1586.5,1220.0C1584.3,1230.7 1582.2,1239.7 1579.5,1249.0C1576.8,1258.3 1574.0,1266.8 1570.5,1276.0C1567.0,1285.2 1563.1,1294.6 1558.5,1304.0C1553.9,1313.4 1548.9,1322.7 1543.0,1332.3C1537.1,1341.9 1530.3,1351.8 1523.0,1361.5C1515.7,1371.2 1507.2,1381.4 1499.0,1390.6C1490.8,1399.8 1482.2,1408.2 1473.5,1416.5C1464.8,1424.8 1455.9,1432.7 1446.5,1440.5C1437.1,1448.3 1427.2,1455.6 1417.0,1463.4C1406.8,1471.2 1395.7,1479.5 1385.0,1487.2C1374.3,1494.9 1367.2,1499.8 1353.0,1509.7C1338.8,1519.6 1317.7,1535.3 1300.0,1546.6C1282.3,1557.8 1264.7,1567.0 1247.0,1577.2C1229.3,1587.4 1209.8,1598.7 1194.0,1607.8C1178.2,1616.9 1162.5,1626.0 1152.0,1632.0C1141.5,1638.0 1134.5,1642.1 1131.0,1644.1L684.8,1632.0L650.7,1621.8Z" fill="url(#gright)"/>
<g clip-path="url(#cprow)">
<rect x="640" y="1150" width="475" height="500" fill="#808386"/>
<path d="M1216.9,1160.4L1234.5,1164.3L1254.0,1172.0L1273.7,1180.0L1305.0,1189.8L1320.0,1190.0L1420.0,1100.0L1420.0,600.0L1200.0,600.0L1200.0,1150.0Z" fill="#4f4f50"/>
<path d="M1250,700 L1300,640 L1350,625 L1350,700 L1300,720 Z" fill="#565657" opacity="0.7"/>
<polygon points="1556,1098 1553,1164 1549,1206 1544.6,1237 1540.4,1255.8 1452.9,1235 1420,1250 1500,1100" fill="#505152"/>
<path d="M1507,1206 L1548.6,1210 M1497,1224.6 L1546.6,1235" stroke="#3a3a3a" stroke-width="0.7" stroke-opacity="0.6" fill="none"/>
<path d="M1556.0,1098.0C1555.5,1109.0 1554.2,1146.2 1553.0,1164.2C1551.8,1182.2 1550.2,1193.7 1548.8,1205.8C1547.4,1217.9 1546.0,1228.8 1544.6,1237.1C1543.2,1245.4 1542.1,1247.8 1540.4,1255.8C1538.7,1263.8 1536.6,1276.0 1534.2,1285.0C1531.8,1294.0 1529.3,1301.3 1525.8,1310.0C1522.3,1318.7 1517.5,1328.8 1513.3,1337.1C1509.1,1345.4 1505.6,1352.0 1500.8,1360.0C1496.0,1368.0 1488.4,1378.3 1484.2,1385.0C1480.0,1391.7 1480.2,1394.0 1475.8,1400.0C1471.4,1406.0 1464.0,1414.0 1458.0,1421.0C1452.0,1428.0 1443.0,1438.5 1440.0,1442.0L1440.0,1448.0C1445.6,1443.1 1463.7,1427.7 1473.5,1418.5C1483.3,1409.3 1490.8,1401.8 1499.0,1392.6C1507.2,1383.4 1515.7,1373.2 1523.0,1363.5C1530.3,1353.8 1537.1,1343.9 1543.0,1334.3C1548.9,1324.7 1553.9,1315.4 1558.5,1306.0C1563.1,1296.6 1567.0,1287.2 1570.5,1278.0C1574.0,1268.8 1576.8,1260.3 1579.5,1251.0C1582.2,1241.7 1584.3,1232.7 1586.5,1222.0C1588.7,1211.3 1590.8,1199.5 1592.5,1187.0C1594.2,1174.5 1595.7,1159.5 1596.7,1147.0C1597.7,1134.5 1598.2,1124.1 1598.7,1112.0C1599.2,1099.9 1599.8,1086.6 1600.0,1074.6C1600.2,1062.6 1600.0,1045.8 1600.0,1040.0Z" fill="#86888a"/>
<path d="M1575.8,1071.9C1575.5,1080.8 1574.9,1109.9 1574.1,1125.5C1573.3,1141.1 1572.2,1153.1 1571.1,1165.5C1570.1,1177.9 1569.0,1189.6 1567.7,1199.9C1566.4,1210.1 1565.2,1217.2 1563.4,1227.2C1561.6,1237.3 1559.5,1249.6 1556.9,1260.1C1554.3,1270.7 1551.4,1280.2 1547.6,1290.4C1543.9,1300.6 1539.1,1311.5 1534.4,1321.3C1529.7,1331.0 1525.1,1339.7 1519.4,1349.0C1513.8,1358.2 1506.2,1368.6 1500.5,1376.8C1494.7,1385.0 1491.0,1390.7 1484.8,1398.2C1478.5,1405.7 1470.2,1414.0 1462.8,1421.8C1455.3,1429.6 1443.8,1440.9 1440.0,1444.7L1440.0,1448.0C1445.6,1443.1 1463.7,1427.7 1473.5,1418.5C1483.3,1409.3 1490.8,1401.8 1499.0,1392.6C1507.2,1383.4 1515.7,1373.2 1523.0,1363.5C1530.3,1353.8 1537.1,1343.9 1543.0,1334.3C1548.9,1324.7 1553.9,1315.4 1558.5,1306.0C1563.1,1296.6 1567.0,1287.2 1570.5,1278.0C1574.0,1268.8 1576.8,1260.3 1579.5,1251.0C1582.2,1241.7 1584.3,1232.7 1586.5,1222.0C1588.7,1211.3 1590.8,1199.5 1592.5,1187.0C1594.2,1174.5 1595.7,1159.5 1596.7,1147.0C1597.7,1134.5 1598.2,1124.1 1598.7,1112.0C1599.2,1099.9 1599.8,1086.6 1600.0,1074.6C1600.2,1062.6 1600.0,1045.8 1600.0,1040.0Z" fill="#999c9f"/>
<g stroke="#333" stroke-width="0.7" stroke-opacity="0.7" fill="none"><path d="M1554.0,1142.8 L1600.0,1049.2"/><path d="M1553.2,1158.7 L1600.0,1067.9"/><path d="M1551.9,1174.7 L1599.6,1086.7"/><path d="M1550.3,1190.6 L1598.9,1105.4"/><path d="M1548.7,1206.5 L1598.0,1124.1"/><path d="M1546.6,1222.4 L1596.9,1142.9"/><path d="M1544.3,1238.2 L1595.2,1161.5"/><path d="M1540.8,1253.8 L1593.2,1180.2"/><path d="M1537.5,1269.5 L1590.5,1198.7"/><path d="M1534.2,1285.1 L1587.3,1217.2"/><path d="M1529.1,1300.3 L1583.2,1235.5"/><path d="M1523.4,1315.2 L1578.6,1253.7"/><path d="M1516.7,1329.8 L1572.7,1271.4"/><path d="M1509.5,1344.1 L1565.8,1288.9"/><path d="M1501.8,1358.1 L1558.4,1306.1"/><path d="M1493.1,1371.5 L1549.4,1322.6"/><path d="M1484.3,1384.9 L1540.0,1338.7"/><path d="M1476.5,1398.8 L1529.4,1354.2"/><path d="M1466.3,1411.2 L1518.2,1369.3"/><path d="M1456.0,1423.4 L1506.3,1383.7"/><path d="M1445.6,1435.5 L1493.9,1397.8"/><path d="M1440.0,1442.0 L1480.7,1411.2"/><path d="M1556.0,1098.0C1555.5,1109.0 1554.2,1146.2 1553.0,1164.2C1551.8,1182.2 1550.2,1193.7 1548.8,1205.8C1547.4,1217.9 1546.0,1228.8 1544.6,1237.1C1543.2,1245.4 1542.1,1247.8 1540.4,1255.8C1538.7,1263.8 1536.6,1276.0 1534.2,1285.0C1531.8,1294.0 1529.3,1301.3 1525.8,1310.0C1522.3,1318.7 1517.5,1328.8 1513.3,1337.1C1509.1,1345.4 1505.6,1352.0 1500.8,1360.0C1496.0,1368.0 1488.4,1378.3 1484.2,1385.0C1480.0,1391.7 1480.2,1394.0 1475.8,1400.0C1471.4,1406.0 1464.0,1414.0 1458.0,1421.0C1452.0,1428.0 1443.0,1438.5 1440.0,1442.0"/></g>
<g filter="url(#b10)" opacity="0.55"><path d="M1345.5,614.7C1346.0,612.8 1346.5,611.5 1350.0,610.0C1353.5,608.5 1361.3,607.1 1366.5,606.0C1371.7,604.9 1376.0,603.9 1381.2,603.5C1386.5,603.1 1393.9,604.8 1398.0,603.5C1402.1,602.2 1404.2,598.8 1406.0,595.5C1407.8,592.2 1407.0,586.1 1409.0,583.5C1411.0,580.9 1413.8,580.9 1418.0,580.0C1422.2,579.1 1429.8,577.2 1434.0,578.0C1438.2,578.8 1439.3,583.2 1443.0,584.5C1446.7,585.8 1452.6,586.5 1456.4,585.5C1460.2,584.5 1461.4,580.7 1466.0,578.5C1470.6,576.3 1478.5,573.0 1483.8,572.3C1489.0,571.6 1494.3,572.5 1497.5,574.5C1500.7,576.5 1500.7,582.3 1503.0,584.5C1505.3,586.7 1507.7,587.2 1511.2,587.7C1514.7,588.2 1519.4,587.2 1524.0,587.7C1528.6,588.2 1534.9,588.4 1538.8,590.9C1542.7,593.4 1545.7,598.9 1547.5,602.5C1549.3,606.1 1549.8,608.2 1549.5,612.5C1549.2,616.8 1547.2,623.4 1546.0,628.0C1544.8,632.6 1543.5,635.3 1542.5,640.0C1541.5,644.7 1540.2,651.0 1540.0,656.0C1539.8,661.0 1540.1,665.3 1541.0,670.0C1541.9,674.7 1544.2,679.5 1545.5,684.0C1546.8,688.5 1548.2,692.5 1549.0,697.0C1549.8,701.5 1551.2,706.5 1550.4,711.0C1549.5,715.5 1545.8,720.2 1543.9,723.9C1542.1,727.6 1539.0,729.7 1539.4,733.1C1539.7,736.5 1542.9,740.4 1545.8,744.1C1548.7,747.8 1552.5,750.9 1556.8,755.2C1561.1,759.4 1566.9,765.3 1571.5,769.9C1576.1,774.5 1581.3,778.8 1584.4,782.7C1587.5,786.7 1589.6,789.8 1589.9,793.8C1590.2,797.8 1589.0,802.3 1586.2,806.6C1583.5,810.9 1578.3,815.2 1573.4,819.5C1568.5,823.8 1561.4,828.7 1556.8,832.4C1552.2,836.1 1547.8,838.8 1545.8,841.6C1543.8,844.3 1545.5,846.5 1544.9,848.9C1544.3,851.4 1538.9,854.7 1542.1,856.3C1545.3,857.8 1556.8,857.4 1564.2,858.1C1571.5,858.9 1580.7,857.8 1586.2,860.9C1591.8,863.9 1593.7,871.8 1597.3,876.5C1600.8,881.3 1605.2,885.1 1607.4,889.4C1609.5,893.7 1609.2,897.3 1610.1,902.2C1611.1,907.1 1613.5,913.3 1612.9,918.8C1612.3,924.3 1608.8,931.0 1606.5,935.3C1604.2,939.6 1600.9,942.5 1599.1,944.5C1597.3,946.5 1595.7,943.6 1595.4,947.3C1595.1,951.0 1596.2,960.2 1597.3,966.6C1598.3,973.0 1599.5,981.6 1601.8,985.7C1604.0,989.9 1608.5,988.5 1610.9,991.3C1613.4,994.0 1616.5,997.7 1616.5,1002.3C1616.5,1006.9 1613.1,1014.2 1610.9,1018.8C1608.8,1023.4 1605.1,1026.2 1603.6,1029.9C1602.1,1033.5 1602.5,1038.8 1601.8,1040.9C1601.0,1043.0 1599.9,1037.8 1599.0,1042.7C1598.1,1047.6 1597.3,1062.0 1596.2,1070.3C1595.2,1078.6 1593.8,1085.6 1592.6,1092.4C1591.3,1099.1 1590.4,1104.6 1588.9,1110.8C1587.3,1116.9 1585.8,1123.9 1583.4,1129.1C1580.9,1134.4 1576.9,1140.8 1574.2,1142.0C1571.4,1143.2 1569.3,1139.9 1566.8,1136.5C1564.4,1133.1 1561.3,1126.7 1559.5,1121.8C1557.6,1116.9 1556.7,1110.5 1555.8,1107.1C1554.9,1103.7 1555.2,1098.5 1553.9,1101.6C1552.7,1104.6 1550.0,1118.4 1548.4,1125.5C1546.9,1132.5 1546.6,1137.7 1544.8,1143.9C1542.9,1150.0 1540.5,1156.1 1537.4,1162.2C1534.3,1168.4 1530.0,1174.8 1526.4,1180.6C1522.7,1186.5 1519.6,1192.0 1515.3,1197.2C1511.0,1202.4 1506.1,1207.3 1500.6,1211.9C1495.1,1216.5 1488.4,1221.4 1482.2,1224.8C1476.1,1228.1 1470.0,1230.3 1463.9,1232.1C1457.7,1233.9 1451.6,1233.9 1445.5,1235.8C1439.3,1237.6 1432.2,1239.7 1427.1,1243.1C1422.0,1246.6 1418.0,1252.1 1414.9,1256.5C1411.8,1260.8 1409.9,1264.4 1408.5,1269.2C1407.2,1274.0 1406.7,1279.8 1406.9,1285.1C1407.2,1290.5 1409.1,1295.8 1410.1,1301.1C1411.2,1306.4 1413.3,1311.7 1413.3,1317.0C1413.3,1322.3 1412.0,1327.6 1410.1,1332.9C1408.3,1338.2 1404.8,1344.4 1402.2,1348.9C1399.5,1353.4 1396.8,1357.1 1394.2,1360.0C1391.5,1362.9 1388.6,1364.3 1386.2,1366.4C1383.8,1368.5 1381.7,1370.1 1379.9,1372.8C1378.0,1375.4 1377.2,1379.9 1375.1,1382.3C1372.9,1384.7 1369.8,1386.8 1367.1,1387.1C1364.5,1387.4 1360.7,1385.8 1359.1,1383.9C1357.5,1382.1 1359.4,1378.1 1357.5,1376.0C1355.7,1373.8 1349.8,1373.6 1348.0,1371.2C1346.1,1368.8 1348.5,1364.3 1346.4,1361.6C1344.3,1359.0 1339.8,1357.9 1335.2,1355.2C1330.7,1352.6 1325.2,1348.9 1319.3,1345.7C1313.5,1342.5 1306.6,1339.0 1300.2,1336.1C1293.8,1333.2 1286.4,1330.0 1281.1,1328.2C1275.8,1326.3 1272.6,1325.2 1268.3,1325.0C1264.1,1324.7 1259.3,1325.2 1255.6,1326.6C1251.9,1327.9 1248.7,1329.8 1246.0,1332.9C1243.4,1336.1 1241.0,1341.4 1239.7,1345.7C1238.3,1349.9 1237.5,1355.0 1238.1,1358.4C1238.6,1361.9 1240.5,1364.3 1242.8,1366.4C1245.2,1368.5 1249.5,1369.3 1252.4,1371.2C1255.3,1373.0 1258.5,1374.9 1260.4,1377.5C1262.2,1380.2 1263.8,1384.2 1263.6,1387.1C1263.3,1390.0 1259.8,1392.4 1258.8,1395.1C1257.7,1397.7 1258.2,1400.6 1257.2,1403.0C1256.1,1405.4 1254.8,1408.1 1252.4,1409.4C1250.0,1410.7 1245.2,1409.7 1242.8,1411.0C1240.5,1412.3 1240.2,1416.8 1238.1,1417.4C1235.9,1417.9 1232.5,1413.9 1230.1,1414.2C1227.7,1414.5 1225.5,1417.0 1223.7,1419.0C1222.0,1421.0 1221.1,1425.6 1219.7,1426.1C1218.4,1426.7 1218.0,1424.1 1215.8,1422.2C1213.5,1420.2 1209.1,1417.1 1206.2,1414.2C1203.3,1411.3 1201.2,1408.1 1198.2,1404.6C1195.3,1401.2 1190.7,1397.5 1188.7,1393.5C1186.7,1389.5 1186.3,1385.0 1186.3,1380.7C1186.3,1376.5 1187.7,1372.2 1188.7,1368.0C1189.6,1363.7 1191.6,1359.0 1191.9,1355.2C1192.1,1351.5 1189.7,1348.6 1190.3,1345.7C1190.8,1342.8 1192.4,1340.4 1195.0,1337.7C1197.7,1335.1 1203.0,1333.2 1206.2,1329.8C1209.4,1326.3 1211.8,1321.8 1214.2,1317.0C1216.6,1312.2 1218.9,1305.9 1220.5,1301.1C1222.1,1296.3 1223.2,1292.6 1223.7,1288.3C1224.3,1284.1 1222.9,1279.3 1223.7,1275.6C1224.5,1271.9 1225.8,1268.3 1228.5,1266.0C1231.2,1263.8 1235.7,1262.3 1239.7,1262.0C1243.6,1261.8 1248.7,1262.8 1252.4,1264.4C1256.1,1266.0 1260.1,1270.8 1262.0,1271.6C1263.8,1272.4 1263.6,1271.2 1263.6,1269.2C1263.6,1267.2 1262.5,1263.1 1262.0,1259.7C1261.4,1256.2 1260.1,1252.8 1260.4,1248.5C1260.6,1244.3 1262.5,1238.4 1263.6,1234.2C1264.6,1229.9 1265.1,1225.8 1266.7,1223.0C1268.3,1220.2 1270.5,1218.2 1273.1,1217.4C1275.8,1216.6 1279.5,1217.3 1282.7,1218.2C1285.9,1219.2 1289.8,1220.9 1292.2,1223.0C1294.6,1225.1 1296.5,1228.1 1297.0,1231.0C1297.5,1233.9 1296.2,1237.4 1295.4,1240.5C1294.6,1243.7 1292.2,1246.4 1292.2,1250.1C1292.2,1253.8 1293.6,1258.9 1295.4,1262.8C1297.3,1266.8 1300.6,1271.9 1303.4,1274.0C1306.2,1276.1 1310.8,1279.3 1312.1,1275.6C1313.5,1271.9 1311.7,1259.7 1311.3,1251.7C1310.9,1243.7 1310.3,1235.8 1309.8,1227.8C1309.2,1219.8 1308.4,1211.9 1308.2,1203.9C1307.9,1195.9 1308.3,1182.0 1308.2,1180.0C1308.1,1178.0 1306.8,1192.5 1307.6,1191.7C1308.4,1190.8 1310.9,1180.0 1313.1,1175.1C1315.2,1170.2 1315.9,1165.3 1320.4,1162.2C1325.0,1159.2 1334.9,1158.6 1340.7,1156.7C1346.5,1154.9 1352.3,1154.6 1355.4,1151.2C1358.4,1147.8 1357.2,1141.7 1359.1,1136.5C1360.9,1131.3 1363.0,1125.2 1366.4,1120.0C1369.8,1114.7 1375.0,1109.2 1379.3,1105.2C1383.6,1101.3 1389.4,1100.3 1392.2,1096.1C1394.9,1091.8 1394.9,1085.0 1395.8,1079.5C1396.7,1074.0 1397.1,1069.1 1397.7,1063.0C1398.3,1056.8 1400.1,1047.6 1399.5,1042.7C1398.9,1037.8 1396.7,1036.9 1394.0,1033.5C1391.2,1030.2 1386.0,1026.5 1383.0,1022.5C1379.9,1018.5 1379.9,1013.0 1375.6,1009.6C1371.3,1006.3 1361.8,1006.0 1357.2,1002.3C1352.6,998.6 1350.2,994.6 1348.0,987.6C1345.9,980.5 1345.1,964.4 1344.4,960.0C1343.6,955.6 1346.1,961.8 1343.5,961.1C1341.0,960.3 1331.0,959.2 1328.8,955.6C1326.7,951.9 1330.4,944.8 1330.7,939.0C1331.0,933.2 1331.9,925.8 1330.7,920.6C1329.4,915.4 1325.2,913.9 1323.3,907.8C1321.5,901.6 1321.5,890.9 1319.6,883.9C1317.8,876.8 1315.0,870.7 1312.3,865.5C1309.5,860.3 1306.2,858.7 1303.1,852.6C1300.0,846.5 1296.4,837.0 1293.9,828.7C1291.5,820.4 1289.6,811.2 1288.4,803.0C1287.2,794.7 1285.9,786.1 1286.5,779.1C1287.2,772.0 1290.5,767.7 1292.1,760.7C1293.6,753.6 1295.4,743.8 1295.7,736.8C1296.0,729.7 1289.9,722.7 1293.9,718.4C1297.9,714.0 1313.5,713.6 1320.0,710.6C1326.5,707.6 1328.5,703.4 1332.7,700.4C1337.0,697.4 1341.7,695.2 1345.5,692.7C1349.3,690.2 1353.0,687.6 1355.7,685.1C1358.5,682.6 1361.6,680.3 1362.0,677.5C1362.4,674.7 1359.9,671.0 1358.2,668.5C1356.5,666.0 1354.4,664.1 1351.9,662.2C1349.4,660.3 1345.8,658.9 1343.0,657.0C1340.2,655.1 1336.0,652.4 1335.3,650.7C1334.6,649.0 1337.0,648.4 1339.1,646.9C1341.2,645.4 1346.1,644.3 1348.0,641.8C1349.9,639.2 1350.8,635.0 1350.6,631.6C1350.4,628.2 1347.6,624.2 1346.8,621.4C1346.0,618.6 1345.0,616.6 1345.5,614.7Z" fill="none" stroke="#3c3e40" stroke-width="22"/></g>
<g stroke="#2a2a2a" stroke-width="0.8" stroke-opacity="0.85" fill="none"><path d="M650.6,1202.4 L962.7,1644.9"/><path d="M650.6,1202.4 L999.9,1644.9"/><path d="M650.6,1202.4 L1020.5,1644.9"/><path d="M735.7,1216.7 L1042.7,1644.5"/><path d="M842.7,1233.7 L1042.8,1643.9"/><path d="M883.7,1238.2 L1053.7,1643.8"/><path d="M907.8,1240.0 L1059.0,1643.8"/><path d="M932.4,1241.2 L1062.3,1643.7"/><path d="M932.4,1241.2 L1084.4,1643.7"/><path d="M955.9,1241.0 L1116.7,1643.7"/><path d="M983.5,1241.2 L1108.6,1643.7"/><path d="M983.5,1241.2 L1149.4,1642.7"/><path d="M1016.9,1236.9 L1148.4,1642.8"/><path d="M1048.2,1232.9 L1147.5,1642.9"/><path d="M1069.8,1229.0 L1146.8,1643.1"/><path d="M1089.4,1224.7 L1146.3,1643.2"/><path d="M1105.0,1221.6 L1147.2,1643.3"/><path d="M1117.5,1220.4 L1222.9,1589.8"/><path d="M1125.9,1215.3 L1222.9,1589.8"/><path d="M1134.3,1210.1 L1222.9,1589.8"/><path d="M1142.9,1205.4 L1222.9,1589.8"/><path d="M1151.9,1201.3 L1222.9,1589.8"/><path d="M1161.4,1196.8 L1300.0,1546.8"/><path d="M1172.1,1190.7 L1300.0,1546.8"/><path d="M1182.8,1184.5 L1300.0,1546.8"/><path d="M1193.1,1177.8 L1300.0,1546.8"/><path d="M1202.6,1171.2 L1351.0,1511.0"/><path d="M1210.6,1165.4 L1351.0,1511.0"/><path d="M1218.6,1160.8 L1351.0,1511.0"/><path d="M1228.3,1162.9 L1351.0,1511.0"/><path d="M1237.7,1165.6 L1351.0,1511.0"/><path d="M1247.6,1169.5 L1400.0,1476.0"/><path d="M1259.0,1174.0 L1400.0,1476.0"/><path d="M1270.4,1178.7 L1400.0,1476.0"/><path d="M1281.9,1183.0 L1400.0,1476.0"/><path d="M1115.0,1290.0 L1222.9,1589.8"/><path d="M1115.0,1340.0 L1222.9,1589.8"/><path d="M1115.0,1372.0 L1222.9,1589.8"/><path d="M1459.3,1250.0 L1538.9,1267.5"/><path d="M1436.4,1250.0 L1536.2,1281.7"/><path d="M1408.1,1260.8 L1532.1,1293.1"/><path d="M1409.4,1274.3 L1528.1,1304.6"/><path d="M1410.1,1289.1 L1522.0,1320.1"/><path d="M1412.1,1303.9 L1515.9,1336.3"/><path d="M1413.5,1314.7 L1509.2,1351.1"/><path d="M1413.5,1329.5 L1501.1,1357.8"/><path d="M1406.7,1343.0 L1493.0,1374.0"/><path d="M1379.8,1344.4 L1480.9,1390.2"/><path d="M1359.6,1352.5 L1467.4,1409.1"/><path d="M1346.1,1357.8 L1447.2,1432.0"/><path d="M1332.6,1363.2 L1429.7,1450.9"/><path d="M1319.1,1368.6 L1416.2,1463.0"/></g>
<g stroke="#2f2f30" stroke-width="0.6" stroke-opacity="0.45" fill="none"><path d="M1288.9,1003.5 L1335.0,1010.0"/><path d="M1289.1,994.6 L1335.0,1002.7"/><path d="M1289.3,985.7 L1335.0,995.3"/><path d="M1289.5,976.9 L1335.0,988.0"/><path d="M1289.1,968.0 L1335.0,980.7"/><path d="M1288.7,959.1 L1335.0,973.3"/><path d="M1288.1,950.3 L1335.0,966.0"/><path d="M1286.7,941.5 L1335.0,958.7"/><path d="M1285.2,932.7 L1335.0,951.3"/><path d="M1283.6,924.0 L1335.0,944.0"/><path d="M1281.5,915.4 L1335.0,936.7"/><path d="M1279.4,906.8 L1335.0,929.3"/><path d="M1277.2,898.1 L1335.0,922.0"/><path d="M1274.9,889.6 L1335.0,914.7"/><path d="M1272.6,881.0 L1335.0,907.3"/><path d="M1270.1,872.5 L1335.0,900.0"/><path d="M1267.7,863.9 L1335.0,892.7"/><path d="M1265.3,855.4 L1335.0,885.3"/><path d="M1262.8,846.8 L1335.0,878.0"/><path d="M1260.3,838.3 L1335.0,870.7"/><path d="M1257.9,829.8 L1335.0,863.3"/><path d="M1255.4,821.3 L1335.0,856.0"/><path d="M1252.9,812.7 L1335.0,848.7"/><path d="M1250.4,804.2 L1335.0,841.3"/><path d="M1248.1,795.6 L1335.0,834.0"/><path d="M1246.0,787.0 L1335.0,826.7"/><path d="M1244.0,778.4 L1335.0,819.3"/><path d="M1242.8,769.5 L1335.0,812.0"/><path d="M1241.7,760.7 L1335.0,804.7"/><path d="M1241.6,751.9 L1335.0,797.3"/><path d="M1241.9,743.0 L1335.0,790.0"/><path d="M1242.5,734.2 L1335.0,782.7"/><path d="M1243.8,725.4 L1335.0,775.3"/><path d="M1245.1,716.6 L1335.0,768.0"/><path d="M1248.0,708.2 L1335.0,760.7"/><path d="M1251.1,699.9 L1335.0,753.3"/><path d="M1255.5,692.2 L1335.0,746.0"/><path d="M1260.2,684.7 L1335.0,738.7"/><path d="M1265.7,677.7 L1335.0,731.3"/><path d="M1271.9,671.5 L1335.0,724.0"/><path d="M1278.4,665.3 L1335.0,716.7"/><path d="M1285.0,659.4 L1335.0,709.3"/><path d="M1291.6,653.5 L1335.0,702.0"/><path d="M1298.4,647.8 L1335.0,694.7"/><path d="M1305.3,642.2 L1335.0,687.3"/><path d="M1312.2,636.6 L1335.0,680.0"/><path d="M1195.3,1162.4 L1345.0,1150.0"/><path d="M1202.5,1158.6 L1345.0,1147.1"/><path d="M1209.6,1154.9 L1345.0,1144.3"/><path d="M1216.8,1151.1 L1345.0,1141.4"/><path d="M1223.5,1146.5 L1345.0,1138.6"/><path d="M1230.1,1141.9 L1345.0,1135.7"/><path d="M1236.4,1136.9 L1345.0,1132.9"/><path d="M1242.2,1131.1 L1345.0,1130.0"/><path d="M1247.9,1125.4 L1345.0,1127.1"/><path d="M1253.6,1119.6 L1345.0,1124.3"/><path d="M1257.9,1112.8 L1345.0,1121.4"/><path d="M1262.1,1105.9 L1345.0,1118.6"/><path d="M1266.2,1098.9 L1345.0,1115.7"/><path d="M1269.9,1091.7 L1345.0,1112.9"/><path d="M1273.5,1084.4 L1345.0,1110.0"/><path d="M1276.5,1076.9 L1345.0,1107.1"/><path d="M1278.5,1069.1 L1345.0,1104.3"/><path d="M1280.5,1061.3 L1345.0,1101.4"/><path d="M1282.3,1053.4 L1345.0,1098.6"/><path d="M1283.6,1045.4 L1345.0,1095.7"/><path d="M1285.0,1037.4 L1345.0,1092.9"/><path d="M1286.3,1029.4 L1345.0,1090.0"/></g>
<path d="M1262,682 L1296,651 L1330,632 L1352,628 L1352,660 L1300,690 Z" fill="#5d5d5e" opacity="0.55"/>
<path d="M650.6,1202.4L696.5,1162.7C710.5,1165.3 748.8,1172.9 780.4,1178.4C812.0,1183.9 861.8,1192.0 886.3,1195.5C910.8,1199.0 916.4,1198.6 927.5,1199.6C938.6,1200.5 944.8,1200.8 953.0,1201.2C961.2,1201.6 968.7,1201.7 976.5,1201.8C984.3,1201.9 989.7,1202.2 1000.0,1201.8C1010.3,1201.4 1025.5,1200.5 1038.4,1199.2C1051.3,1197.9 1064.5,1195.8 1077.6,1193.7C1090.7,1191.7 1103.8,1189.7 1116.9,1186.9C1130.0,1184.1 1142.9,1181.1 1156.0,1177.0C1169.1,1172.9 1185.1,1166.7 1195.3,1162.4C1205.5,1158.1 1210.5,1154.9 1217.0,1151.0C1223.5,1147.1 1231.6,1140.8 1234.5,1138.8L1233.5,1141.8C1232.2,1143.5 1228.3,1148.9 1225.5,1152.0C1222.7,1155.1 1220.0,1157.7 1216.9,1160.4C1213.8,1163.1 1210.3,1165.6 1207.0,1168.2C1203.7,1170.8 1200.9,1173.5 1197.3,1176.0C1193.7,1178.5 1189.4,1180.7 1185.5,1183.0C1181.6,1185.3 1178.0,1187.4 1173.7,1189.8C1169.5,1192.2 1165.9,1194.6 1160.0,1197.6C1154.1,1200.5 1144.9,1204.5 1138.4,1207.5C1131.9,1210.5 1126.4,1213.0 1120.8,1215.3C1115.2,1217.5 1110.2,1219.4 1105.0,1221.0C1099.8,1222.6 1095.3,1223.4 1089.4,1224.7C1083.5,1226.0 1076.7,1227.6 1069.8,1229.0C1062.9,1230.4 1057.0,1231.6 1048.2,1232.9C1039.4,1234.2 1027.5,1235.7 1016.9,1236.9C1006.2,1238.1 994.5,1239.5 984.3,1240.2C974.1,1240.9 964.5,1241.0 955.9,1241.2C947.2,1241.4 940.4,1241.4 932.4,1241.2C924.4,1241.0 915.9,1240.5 907.8,1240.0C899.7,1239.5 894.6,1239.2 883.7,1238.2C872.9,1237.2 867.4,1237.3 842.7,1233.7C818.0,1230.1 767.7,1221.9 735.7,1216.7C703.7,1211.5 664.8,1204.8 650.6,1202.4Z" fill="url(#gtop)"/>
<g stroke="#444" stroke-width="0.7" stroke-opacity="0.8" fill="none"><path d="M696.5,1162.7 L735.7,1216.7"/><path d="M735.7,1216.7 L780.4,1178.4"/><path d="M780.4,1178.4 L842.7,1233.7"/><path d="M842.7,1233.7 L886.3,1195.5"/><path d="M886.3,1195.5 L883.7,1238.2"/><path d="M883.7,1238.2 L927.5,1200.0"/><path d="M927.5,1200.0 L907.8,1240.0"/><path d="M907.8,1240.0 L953.0,1201.2"/><path d="M953.0,1201.2 L932.4,1241.2"/><path d="M932.4,1241.2 L976.5,1201.4"/><path d="M976.5,1201.4 L955.9,1241.0"/><path d="M955.9,1241.0 L1000.0,1201.6"/><path d="M1000.0,1201.6 L983.5,1241.2"/><path d="M983.5,1241.2 L1027.0,1200.4"/><path d="M1027.0,1200.4 L1016.9,1236.9"/><path d="M1016.9,1236.9 L1060.0,1196.5"/><path d="M1060.0,1196.5 L1048.2,1232.9"/><path d="M1048.2,1232.9 L1091.0,1191.6"/><path d="M1091.0,1191.6 L1069.8,1229.0"/><path d="M1069.8,1229.0 L1113.0,1187.6"/><path d="M1113.0,1187.6 L1089.4,1224.7"/><path d="M1089.4,1224.7 L1129.0,1184.0"/><path d="M1129.0,1184.0 L1105.0,1221.6"/><path d="M1105.0,1221.6 L1147.0,1179.5"/><path d="M1147.0,1179.5 L1120.8,1215.3"/><path d="M1120.8,1215.3 L1165.0,1174.0"/><path d="M1165.0,1174.0 L1138.4,1207.5"/><path d="M1138.4,1207.5 L1183.0,1167.5"/><path d="M1183.0,1167.5 L1160.0,1197.6"/><path d="M1160.0,1197.6 L1195.0,1162.5"/><path d="M1195.0,1162.5 L1173.7,1189.8"/><path d="M1173.7,1189.8 L1205.0,1158.0"/><path d="M1205.0,1158.0 L1185.5,1183.0"/><path d="M1185.5,1183.0 L1213.0,1153.5"/><path d="M1213.0,1153.5 L1197.3,1176.0"/></g>
</g>
<path d="M650.6,1202.4L696.5,1162.7C710.5,1165.3 748.8,1172.9 780.4,1178.4C812.0,1183.9 861.8,1192.0 886.3,1195.5C910.8,1199.0 916.4,1198.6 927.5,1199.6C938.6,1200.5 944.8,1200.8 953.0,1201.2C961.2,1201.6 968.7,1201.7 976.5,1201.8C984.3,1201.9 989.7,1202.2 1000.0,1201.8C1010.3,1201.4 1025.5,1200.5 1038.4,1199.2C1051.3,1197.9 1064.5,1195.8 1077.6,1193.7C1090.7,1191.7 1103.8,1189.7 1116.9,1186.9C1130.0,1184.1 1142.9,1181.1 1156.0,1177.0C1169.1,1172.9 1185.1,1166.7 1195.3,1162.4C1205.5,1158.1 1210.5,1154.9 1217.0,1151.0C1223.5,1147.1 1228.3,1144.1 1234.5,1138.8C1240.7,1133.5 1248.8,1125.7 1254.0,1119.2C1259.2,1112.7 1262.3,1106.1 1265.9,1099.6C1269.5,1093.1 1273.0,1087.4 1275.7,1080.0C1278.4,1072.6 1280.2,1063.7 1282.0,1055.3C1283.8,1046.9 1285.1,1038.0 1286.3,1029.4C1287.5,1020.8 1288.4,1012.1 1288.9,1003.5C1289.4,994.9 1289.6,986.3 1289.5,977.7C1289.4,969.1 1289.3,960.4 1288.4,951.8C1287.5,943.2 1285.9,934.5 1284.1,925.9C1282.3,917.3 1279.5,907.0 1277.7,900.0C1275.9,893.0 1275.5,891.4 1273.3,883.6C1271.1,875.8 1267.4,862.8 1264.7,853.4C1262.0,844.0 1259.7,836.1 1257.2,827.5C1254.7,818.9 1251.8,809.5 1249.6,801.6C1247.4,793.7 1245.6,787.2 1244.2,780.0C1242.8,772.8 1241.8,765.6 1241.4,758.4C1241.1,751.2 1241.4,744.1 1242.1,736.9C1242.8,729.7 1243.7,721.8 1245.3,715.3C1246.9,708.8 1248.9,703.8 1251.8,698.0C1254.7,692.2 1258.6,685.8 1262.6,680.8C1266.5,675.8 1270.1,672.9 1275.5,667.9C1280.9,662.9 1288.8,655.8 1294.9,650.6C1301.0,645.4 1306.5,640.2 1312.2,636.6C1318.0,633.0 1323.7,630.7 1329.4,629.0C1335.2,627.3 1343.8,626.8 1346.7,626.4L1599.0,1042.4C1599.5,1047.4 1599.9,1061.3 1599.8,1072.6C1599.7,1083.9 1599.2,1097.9 1598.7,1110.0C1598.2,1122.1 1597.7,1132.5 1596.7,1145.0C1595.7,1157.5 1594.2,1172.5 1592.5,1185.0C1590.8,1197.5 1588.7,1209.3 1586.5,1220.0C1584.3,1230.7 1582.2,1239.7 1579.5,1249.0C1576.8,1258.3 1574.0,1266.8 1570.5,1276.0C1567.0,1285.2 1563.1,1294.6 1558.5,1304.0C1553.9,1313.4 1548.9,1322.7 1543.0,1332.3C1537.1,1341.9 1530.3,1351.8 1523.0,1361.5C1515.7,1371.2 1507.2,1381.4 1499.0,1390.6C1490.8,1399.8 1482.2,1408.2 1473.5,1416.5C1464.8,1424.8 1455.9,1432.7 1446.5,1440.5C1437.1,1448.3 1427.2,1455.6 1417.0,1463.4C1406.8,1471.2 1395.7,1479.5 1385.0,1487.2C1374.3,1494.9 1367.2,1499.8 1353.0,1509.7C1338.8,1519.6 1317.7,1535.3 1300.0,1546.6C1282.3,1557.8 1264.7,1567.0 1247.0,1577.2C1229.3,1587.4 1209.8,1598.7 1194.0,1607.8C1178.2,1616.9 1162.5,1626.0 1152.0,1632.0C1141.5,1638.0 1134.5,1642.1 1131.0,1644.1L684.8,1632.0L650.7,1621.8Z" fill="none" stroke="#000" stroke-width="1.8" stroke-linejoin="round"/>
<path d="M650.6,1202.4C664.8,1204.8 703.7,1211.5 735.7,1216.7C767.7,1221.9 818.0,1230.1 842.7,1233.7C867.4,1237.3 872.9,1237.2 883.7,1238.2C894.6,1239.2 899.7,1239.5 907.8,1240.0C915.9,1240.5 924.4,1241.0 932.4,1241.2C940.4,1241.4 947.2,1241.4 955.9,1241.2C964.5,1241.0 974.1,1240.9 984.3,1240.2C994.5,1239.5 1006.2,1238.1 1016.9,1236.9C1027.5,1235.7 1039.4,1234.2 1048.2,1232.9C1057.0,1231.6 1062.9,1230.4 1069.8,1229.0C1076.7,1227.6 1083.5,1226.0 1089.4,1224.7C1095.3,1223.4 1099.8,1222.6 1105.0,1221.0C1110.2,1219.4 1115.2,1217.5 1120.8,1215.3C1126.4,1213.0 1131.9,1210.5 1138.4,1207.5C1144.9,1204.5 1154.1,1200.5 1160.0,1197.6C1165.9,1194.6 1169.5,1192.2 1173.7,1189.8C1178.0,1187.4 1181.6,1185.3 1185.5,1183.0C1189.4,1180.7 1193.7,1178.5 1197.3,1176.0C1200.9,1173.5 1203.7,1170.8 1207.0,1168.2C1210.3,1165.6 1213.8,1163.1 1216.9,1160.4C1220.0,1157.7 1222.7,1155.1 1225.5,1152.0C1228.3,1148.9 1232.2,1143.5 1233.5,1141.8" fill="none" stroke="#3a3a3a" stroke-width="1"/>
<path d="M1215.5,1161.5 L1225.5,1152 L1233.5,1141.8" fill="none" stroke="#000" stroke-width="2"/>
<g clip-path="url(#clion)">
<rect x="1150" y="540" width="500" height="920" fill="#414548"/>
<g filter="url(#b2)" fill="none" stroke="#1f2123" stroke-opacity="0.4" stroke-linecap="round" stroke-linejoin="round"><path d="M1387.7,751.5C1391.3,752.1 1403.6,752.7 1409.7,755.2C1415.9,757.6 1422.0,764.4 1424.4,766.2" stroke-width="10"/><path d="M1426.3,810.3C1430.9,811.5 1444.7,815.2 1453.9,817.7C1463.1,820.1 1472.2,821.3 1481.4,825.0C1490.6,828.7 1500.4,836.1 1509.0,839.7C1517.6,843.4 1528.9,845.9 1532.9,847.1" stroke-width="9"/><path d="M1499.8,810.3C1504.4,811.5 1522.8,816.4 1527.4,817.7" stroke-width="6"/><path d="M1426.3,843.4C1426.3,847.1 1427.2,858.7 1426.3,865.5C1425.4,872.2 1425.4,877.7 1420.8,883.9C1416.2,890.0 1402.4,899.2 1398.7,902.2" stroke-width="5"/><path d="M1536.6,911.4C1539.7,914.5 1548.9,922.8 1555.0,929.8C1561.1,936.9 1570.3,949.7 1573.4,953.7" stroke-width="5"/><path d="M1481.4,961.1C1484.5,963.5 1496.8,973.3 1499.8,975.8" stroke-width="6"/><path d="M1500.6,1085.0C1505.2,1085.0 1520.9,1086.9 1528.2,1085.0C1535.6,1083.2 1542.0,1075.8 1544.8,1074.0" stroke-width="12"/><path d="M1394.0,1125.5C1396.4,1128.5 1404.4,1136.2 1408.7,1143.9C1413.0,1151.5 1416.7,1162.2 1419.7,1171.4C1422.8,1180.6 1425.9,1194.4 1427.1,1199.0" stroke-width="14"/><path d="M1463.9,1015.2C1466.9,1018.2 1476.1,1028.9 1482.2,1033.5C1488.4,1038.1 1497.6,1041.2 1500.6,1042.7" stroke-width="8"/><path d="M1316.1,1310.6C1316.7,1315.4 1318.8,1334.5 1319.3,1339.3" stroke-width="3"/><path d="M1311.3,1275.6C1315.3,1276.6 1327.3,1283.0 1335.2,1282.0C1343.2,1280.9 1355.2,1271.3 1359.1,1269.2" stroke-width="6"/><path d="M1363.3,655.8C1365.0,657.3 1371.4,661.1 1373.5,664.7C1375.7,668.3 1375.7,675.3 1376.1,677.5" stroke-width="14"/><path d="M1453.8,616.3C1458.1,617.1 1470.8,619.7 1479.3,621.4C1487.8,623.1 1500.6,625.6 1504.8,626.5" stroke-width="8"/><path d="M1396.5,696.6C1402.8,697.2 1424.1,699.3 1434.7,700.4C1445.3,701.5 1456.0,702.5 1460.2,702.9" stroke-width="10"/></g>
<g filter="url(#b2)" fill="none" stroke="#79828a" stroke-opacity="0.42" stroke-linecap="round" stroke-linejoin="round"><path d="M1352.7,731.3C1350.3,734.0 1341.4,741.4 1338.0,747.8C1334.7,754.2 1331.0,763.1 1332.5,769.9C1334.0,776.6 1340.5,782.7 1347.2,788.3C1354.0,793.8 1363.8,799.6 1373.0,803.0C1382.2,806.3 1397.5,807.6 1402.4,808.5" stroke-width="5"/><path d="M1373.0,742.3C1371.1,745.4 1361.9,754.5 1361.9,760.7C1361.9,766.8 1366.8,774.5 1373.0,779.1C1379.1,783.7 1394.4,786.7 1398.7,788.3" stroke-width="5"/><path d="M1317.8,769.9C1316.9,773.5 1310.1,785.2 1312.3,791.9C1314.4,798.7 1321.8,805.4 1330.7,810.3C1339.6,815.2 1353.7,819.5 1365.6,821.3C1377.6,823.2 1396.2,821.3 1402.4,821.3" stroke-width="5"/><path d="M1330.7,839.7C1334.4,839.1 1346.3,834.8 1352.7,836.1C1359.2,837.3 1366.5,845.2 1369.3,847.1" stroke-width="4"/><path d="M1395.0,861.8C1397.5,864.2 1409.1,871.0 1409.7,876.5C1410.3,882.0 1400.5,891.8 1398.7,894.9" stroke-width="4"/><path d="M1358.3,966.6C1361.9,967.5 1371.7,970.6 1380.3,972.1C1388.9,973.6 1400.5,974.6 1409.7,975.8C1418.9,977.0 1431.2,978.9 1435.5,979.5" stroke-width="5"/><path d="M1398.7,953.7C1401.8,955.6 1414.0,962.9 1417.1,964.8" stroke-width="4"/><path d="M1470.4,764.4C1472.5,765.3 1478.7,769.9 1483.3,769.9C1487.9,769.9 1495.5,765.3 1498.0,764.4" stroke-width="6"/><path d="M1542.1,769.9C1544.6,772.0 1552.5,778.4 1556.8,782.7C1561.1,787.0 1567.2,792.2 1567.8,795.6C1568.5,799.0 1565.7,801.7 1560.5,803.0C1555.3,804.2 1540.6,803.0 1536.6,803.0" stroke-width="9"/><path d="M1453.9,779.1C1460.0,780.3 1478.4,783.7 1490.6,786.4C1502.9,789.2 1521.3,794.1 1527.4,795.6" stroke-width="5"/><path d="M1470.4,832.4C1472.5,834.5 1477.5,841.3 1483.3,845.2C1489.1,849.2 1497.4,854.7 1505.3,856.3C1513.3,857.8 1526.8,854.7 1531.1,854.4" stroke-width="6"/><path d="M1435.5,711.0C1443.1,711.3 1466.1,713.5 1481.4,712.9C1496.8,712.3 1519.7,708.3 1527.4,707.4" stroke-width="5"/><path d="M1472.2,731.3C1478.4,731.3 1498.3,732.8 1509.0,731.3C1519.7,729.7 1532.0,723.6 1536.6,722.1" stroke-width="5"/><path d="M1457.5,887.5C1461.5,888.8 1473.5,892.4 1481.4,894.9C1489.4,897.3 1501.4,901.0 1505.3,902.2" stroke-width="7"/><path d="M1509.0,917.0C1512.7,920.0 1524.9,929.2 1531.1,935.3C1537.2,941.5 1541.5,947.6 1545.8,953.7C1550.1,959.9 1555.0,969.0 1556.8,972.1" stroke-width="5"/><path d="M1490.6,939.0C1493.7,942.1 1503.5,951.9 1509.0,957.4C1514.5,962.9 1521.3,969.7 1523.7,972.1" stroke-width="5"/><path d="M1435.5,907.8C1441.6,908.4 1460.0,910.2 1472.2,911.4C1484.5,912.7 1502.9,914.5 1509.0,915.1" stroke-width="4"/><path d="M1549.5,880.2C1552.5,879.6 1562.3,878.3 1567.8,876.5C1573.4,874.7 1580.1,870.4 1582.6,869.1" stroke-width="6"/><path d="M1582.6,898.6C1585.0,901.6 1594.2,911.4 1597.3,917.0C1600.3,922.5 1600.3,929.2 1600.9,931.7" stroke-width="6"/><path d="M1440.0,1116.3C1441.8,1118.4 1447.6,1124.6 1451.0,1129.1C1454.4,1133.7 1458.6,1141.4 1460.2,1143.9" stroke-width="6"/><path d="M1452.8,1175.1C1454.7,1175.7 1460.2,1179.1 1463.9,1178.8C1467.5,1178.5 1473.1,1174.2 1474.9,1173.3" stroke-width="7"/><path d="M1412.4,1064.8C1413.6,1065.7 1418.5,1069.4 1419.7,1070.3" stroke-width="5"/><path d="M1526.4,1053.8C1528.2,1055.6 1535.6,1063.0 1537.4,1064.8" stroke-width="6"/><path d="M1360.9,967.4C1363.3,969.2 1373.2,976.5 1375.6,978.4" stroke-width="4"/><path d="M1397.7,965.5C1400.1,966.7 1406.9,970.1 1412.4,972.9C1417.9,975.6 1427.7,980.5 1430.8,982.1" stroke-width="4"/><path d="M1482.2,974.7C1485.3,977.2 1497.6,987.0 1500.6,989.4" stroke-width="4"/><path d="M1546.6,967.4C1548.7,969.2 1557.3,976.5 1559.5,978.4" stroke-width="4"/><path d="M1603.6,996.8C1604.5,998.6 1608.2,1006.0 1609.1,1007.8" stroke-width="5"/><path d="M1383.0,1107.1C1387.3,1106.8 1400.1,1104.3 1408.7,1105.2C1417.3,1106.2 1430.2,1111.4 1434.4,1112.6" stroke-width="5"/><path d="M1359.1,1180.6C1359.7,1186.8 1361.5,1205.1 1362.7,1217.4C1364.0,1229.7 1365.8,1248.0 1366.4,1254.2" stroke-width="3"/><path d="M1271.5,1246.9C1273.6,1249.6 1281.6,1258.1 1284.3,1262.8C1286.9,1267.6 1286.9,1273.5 1287.4,1275.6" stroke-width="6"/><path d="M1239.7,1288.3C1242.8,1289.4 1251.9,1292.0 1258.8,1294.7C1265.7,1297.4 1273.6,1301.6 1281.1,1304.3C1288.5,1306.9 1299.7,1309.6 1303.4,1310.6" stroke-width="7"/><path d="M1201.4,1363.2C1203.3,1364.5 1208.3,1368.3 1212.6,1371.2C1216.8,1374.1 1220.8,1379.4 1226.9,1380.7C1233.0,1382.1 1245.5,1379.4 1249.2,1379.1" stroke-width="8"/><path d="M1362.3,1216.6C1362.9,1221.2 1364.7,1237.1 1365.5,1243.7C1366.3,1250.4 1366.8,1254.3 1367.1,1256.5" stroke-width="4"/><path d="M1379.9,1304.3C1380.9,1307.4 1385.2,1320.2 1386.2,1323.4" stroke-width="4"/><path d="M1348.0,1342.5C1350.6,1343.6 1361.3,1347.8 1363.9,1348.9" stroke-width="4"/><path d="M1419.4,631.6C1420.9,634.1 1425.8,641.3 1428.3,646.9C1430.9,652.4 1433.6,661.7 1434.7,664.7" stroke-width="10"/><path d="M1483.1,646.9C1484.2,648.8 1489.1,654.3 1489.5,658.3C1489.9,662.4 1486.3,669.0 1485.7,671.1" stroke-width="8"/><path d="M1470.4,710.6C1474.0,710.0 1484.8,708.9 1492.1,706.8C1499.3,704.6 1507.4,700.6 1513.7,697.8C1520.1,695.1 1527.5,691.5 1530.3,690.2" stroke-width="5"/><path d="M1391.4,652.0C1392.6,653.7 1397.7,660.5 1399.0,662.2" stroke-width="5"/><path d="M1517.6,601.0C1519.7,601.0 1528.2,601.0 1530.3,601.0" stroke-width="5"/><path d="M1438.5,587.0C1439.2,587.6 1441.7,590.1 1442.4,590.8" stroke-width="4"/></g>
<g filter="url(#b1)" fill="none" stroke="#1b1d1f" stroke-opacity="0.6" stroke-linecap="round" stroke-linejoin="round"><path d="M1263.6,1269.2C1264.9,1271.6 1267.5,1278.8 1271.5,1283.6C1275.5,1288.3 1280.8,1294.2 1287.4,1297.9C1294.1,1301.6 1303.4,1305.1 1311.3,1305.9C1319.3,1306.7 1327.3,1305.3 1335.2,1302.7C1343.2,1300.0 1353.0,1295.5 1359.1,1289.9C1365.2,1284.3 1369.2,1275.6 1371.9,1269.2C1374.5,1262.8 1374.5,1254.6 1375.1,1251.7" stroke-width="2.5"/><path d="M1312.1,1275.6C1315.5,1276.9 1325.6,1283.6 1332.1,1283.6C1338.6,1283.6 1346.4,1279.6 1351.2,1275.6C1356.0,1271.6 1359.1,1262.3 1360.7,1259.7" stroke-width="2.5"/><path d="M1262.0,1272.4C1265.1,1275.6 1274.2,1286.2 1281.1,1291.5C1288.0,1296.8 1297.5,1301.1 1303.4,1304.3C1309.2,1307.4 1314.0,1309.6 1316.1,1310.6" stroke-width="2"/><path d="M1316.1,1310.6C1316.7,1315.4 1318.8,1333.2 1319.3,1339.3C1319.8,1345.4 1319.3,1345.9 1319.3,1347.3" stroke-width="2"/><path d="M1212.6,1403.0C1213.6,1405.7 1217.9,1416.3 1218.9,1419.0" stroke-width="2"/><path d="M1226.9,1399.9C1228.2,1402.2 1233.5,1411.8 1234.9,1414.2" stroke-width="2"/><path d="M1242.8,1393.5C1244.2,1395.6 1249.5,1404.1 1250.8,1406.2" stroke-width="2"/><path d="M1359.1,1376.0C1360.2,1377.5 1364.5,1383.9 1365.5,1385.5" stroke-width="2"/><path d="M1371.9,1371.2C1372.4,1372.8 1374.5,1379.1 1375.1,1380.7" stroke-width="2"/><path d="M1343.2,1339.3C1345.9,1340.6 1352.5,1347.3 1359.1,1347.3C1365.8,1347.3 1376.4,1343.3 1383.0,1339.3C1389.7,1335.3 1396.3,1326.0 1399.0,1323.4" stroke-width="2"/><path d="M1196.6,1339.3C1199.3,1341.4 1207.5,1348.1 1212.6,1352.1C1217.6,1356.0 1224.5,1361.3 1226.9,1363.2" stroke-width="2"/><path d="M1379.3,1105.2C1384.2,1104.6 1398.9,1100.0 1408.7,1101.6C1418.5,1103.1 1430.2,1108.6 1438.1,1114.4C1446.1,1120.3 1451.9,1127.9 1456.5,1136.5C1461.1,1145.1 1461.4,1158.6 1465.7,1165.9C1470.0,1173.3 1476.4,1178.8 1482.2,1180.6C1488.1,1182.5 1497.6,1177.6 1500.6,1177.0" stroke-width="3"/><path d="M1463.9,1088.7C1470.0,1090.5 1488.4,1098.5 1500.6,1099.7C1512.9,1101.0 1531.3,1096.7 1537.4,1096.1" stroke-width="3"/><path d="M1445.5,1015.2C1451.6,1018.8 1470.0,1029.3 1482.2,1037.2C1494.5,1045.2 1509.2,1057.4 1519.0,1063.0C1528.8,1068.5 1537.4,1069.1 1541.1,1070.3" stroke-width="3"/><path d="M1383.0,1022.5C1387.3,1025.0 1398.3,1034.2 1408.7,1037.2C1419.1,1040.3 1439.3,1040.3 1445.5,1040.9" stroke-width="2.5"/><path d="M1412.4,1125.5C1414.8,1128.5 1423.1,1136.2 1427.1,1143.9C1431.1,1151.5 1433.2,1162.2 1436.3,1171.4C1439.3,1180.6 1443.9,1194.4 1445.5,1199.0" stroke-width="2.5"/><path d="M1555.8,1107.1C1555.2,1101.0 1549.0,1082.6 1552.1,1070.3C1555.2,1058.1 1566.8,1042.7 1574.2,1033.5C1581.5,1024.4 1592.6,1018.2 1596.2,1015.2" stroke-width="2.5"/><path d="M1519.0,987.6C1522.1,990.6 1531.3,1001.4 1537.4,1006.0C1543.5,1010.6 1552.7,1013.6 1555.8,1015.2" stroke-width="2.5"/><path d="M1431.8,703.7C1438.5,706.4 1459.4,717.5 1472.2,720.2C1485.1,723.0 1497.4,721.8 1509.0,720.2C1520.7,718.7 1536.6,712.6 1542.1,711.0" stroke-width="3"/><path d="M1435.5,746.0C1440.1,747.5 1452.3,753.9 1463.1,755.2C1473.8,756.4 1489.1,755.5 1499.8,753.3C1510.5,751.2 1522.8,744.1 1527.4,742.3" stroke-width="3"/><path d="M1542.1,858.1C1539.7,859.3 1532.9,862.4 1527.4,865.5C1521.9,868.5 1513.6,871.9 1509.0,876.5C1504.4,881.1 1501.4,890.3 1499.8,893.1" stroke-width="2.5"/><path d="M1509.0,876.5C1515.1,877.7 1535.1,879.6 1545.8,883.9C1556.5,888.1 1565.7,894.6 1573.4,902.2C1581.0,909.9 1588.7,925.2 1591.8,929.8" stroke-width="2.5"/><path d="M1426.3,911.4C1430.9,913.0 1443.1,917.6 1453.9,920.6C1464.6,923.7 1479.9,925.2 1490.6,929.8C1501.4,934.4 1513.6,945.1 1518.2,948.2" stroke-width="2.5"/><path d="M1380.3,911.4C1383.4,916.0 1391.0,931.4 1398.7,939.0C1406.4,946.7 1417.1,952.8 1426.3,957.4C1435.5,962.0 1449.3,965.1 1453.9,966.6" stroke-width="2.5"/><path d="M1325.2,828.7C1329.8,831.8 1343.5,843.1 1352.7,847.1C1361.9,851.1 1375.7,851.7 1380.3,852.6" stroke-width="2.5"/><path d="M1422.6,780.9C1424.7,784.6 1434.6,793.2 1435.5,803.0C1436.4,812.8 1429.3,833.6 1428.1,839.7" stroke-width="3"/><path d="M1350.6,631.6C1354.0,630.7 1363.3,626.5 1371.0,626.5C1378.6,626.5 1388.8,631.6 1396.5,631.6C1404.1,631.6 1413.5,627.3 1416.9,626.5" stroke-width="2.5"/><path d="M1416.9,626.5C1418.1,630.7 1422.0,643.5 1424.5,652.0C1427.1,660.5 1428.8,670.0 1432.2,677.5C1435.6,684.9 1442.8,693.4 1444.9,696.6" stroke-width="2.5"/><path d="M1444.9,621.4C1445.3,626.5 1447.5,639.4 1447.5,652.0C1447.5,664.5 1445.3,689.1 1444.9,696.6" stroke-width="2.5"/><path d="M1464.0,631.6C1466.6,637.1 1475.7,656.0 1479.3,664.7C1482.9,673.4 1484.6,680.6 1485.7,683.8" stroke-width="2.5"/><path d="M1453.8,616.3C1459.1,616.7 1476.1,616.7 1485.7,618.8C1495.2,620.9 1502.7,625.6 1511.2,629.0C1519.7,632.4 1532.4,637.5 1536.7,639.2" stroke-width="3"/><path d="M1362.1,677.5C1367.8,679.6 1382.2,686.4 1396.5,690.2C1410.7,694.0 1430.5,699.3 1447.5,700.4C1464.4,701.5 1483.6,699.3 1498.4,696.6C1513.3,693.8 1530.3,686.0 1536.7,683.8" stroke-width="3"/><path d="M1511.2,611.2C1513.3,610.5 1522.0,606.5 1523.9,607.4C1525.8,608.2 1522.9,614.8 1522.7,616.3" stroke-width="2"/></g>
<g mask="url(#mhi)"><rect x="1150" y="540" width="500" height="920" filter="url(#nz)"/></g>
<rect x="1150" y="540" width="500" height="920" filter="url(#nz2)" opacity="0.4"/>
<path d="M1345.5,614.7C1346.0,612.8 1346.5,611.5 1350.0,610.0C1353.5,608.5 1361.3,607.1 1366.5,606.0C1371.7,604.9 1376.0,603.9 1381.2,603.5C1386.5,603.1 1393.9,604.8 1398.0,603.5C1402.1,602.2 1404.2,598.8 1406.0,595.5C1407.8,592.2 1407.0,586.1 1409.0,583.5C1411.0,580.9 1413.8,580.9 1418.0,580.0C1422.2,579.1 1429.8,577.2 1434.0,578.0C1438.2,578.8 1439.3,583.2 1443.0,584.5C1446.7,585.8 1452.6,586.5 1456.4,585.5C1460.2,584.5 1461.4,580.7 1466.0,578.5C1470.6,576.3 1478.5,573.0 1483.8,572.3C1489.0,571.6 1494.3,572.5 1497.5,574.5C1500.7,576.5 1500.7,582.3 1503.0,584.5C1505.3,586.7 1507.7,587.2 1511.2,587.7C1514.7,588.2 1519.4,587.2 1524.0,587.7C1528.6,588.2 1534.9,588.4 1538.8,590.9C1542.7,593.4 1545.7,598.9 1547.5,602.5C1549.3,606.1 1549.8,608.2 1549.5,612.5C1549.2,616.8 1547.2,623.4 1546.0,628.0C1544.8,632.6 1543.5,635.3 1542.5,640.0C1541.5,644.7 1540.2,651.0 1540.0,656.0C1539.8,661.0 1540.1,665.3 1541.0,670.0C1541.9,674.7 1544.2,679.5 1545.5,684.0C1546.8,688.5 1548.2,692.5 1549.0,697.0C1549.8,701.5 1551.2,706.5 1550.4,711.0C1549.5,715.5 1545.8,720.2 1543.9,723.9C1542.1,727.6 1539.0,729.7 1539.4,733.1C1539.7,736.5 1542.9,740.4 1545.8,744.1C1548.7,747.8 1552.5,750.9 1556.8,755.2C1561.1,759.4 1566.9,765.3 1571.5,769.9C1576.1,774.5 1581.3,778.8 1584.4,782.7C1587.5,786.7 1589.6,789.8 1589.9,793.8C1590.2,797.8 1589.0,802.3 1586.2,806.6C1583.5,810.9 1578.3,815.2 1573.4,819.5C1568.5,823.8 1561.4,828.7 1556.8,832.4C1552.2,836.1 1547.8,838.8 1545.8,841.6C1543.8,844.3 1545.5,846.5 1544.9,848.9C1544.3,851.4 1538.9,854.7 1542.1,856.3C1545.3,857.8 1556.8,857.4 1564.2,858.1C1571.5,858.9 1580.7,857.8 1586.2,860.9C1591.8,863.9 1593.7,871.8 1597.3,876.5C1600.8,881.3 1605.2,885.1 1607.4,889.4C1609.5,893.7 1609.2,897.3 1610.1,902.2C1611.1,907.1 1613.5,913.3 1612.9,918.8C1612.3,924.3 1608.8,931.0 1606.5,935.3C1604.2,939.6 1600.9,942.5 1599.1,944.5C1597.3,946.5 1595.7,943.6 1595.4,947.3C1595.1,951.0 1596.2,960.2 1597.3,966.6C1598.3,973.0 1599.5,981.6 1601.8,985.7C1604.0,989.9 1608.5,988.5 1610.9,991.3C1613.4,994.0 1616.5,997.7 1616.5,1002.3C1616.5,1006.9 1613.1,1014.2 1610.9,1018.8C1608.8,1023.4 1605.1,1026.2 1603.6,1029.9C1602.1,1033.5 1602.5,1038.8 1601.8,1040.9C1601.0,1043.0 1599.9,1037.8 1599.0,1042.7C1598.1,1047.6 1597.3,1062.0 1596.2,1070.3C1595.2,1078.6 1593.8,1085.6 1592.6,1092.4C1591.3,1099.1 1590.4,1104.6 1588.9,1110.8C1587.3,1116.9 1585.8,1123.9 1583.4,1129.1C1580.9,1134.4 1576.9,1140.8 1574.2,1142.0C1571.4,1143.2 1569.3,1139.9 1566.8,1136.5C1564.4,1133.1 1561.3,1126.7 1559.5,1121.8C1557.6,1116.9 1556.7,1110.5 1555.8,1107.1C1554.9,1103.7 1555.2,1098.5 1553.9,1101.6C1552.7,1104.6 1550.0,1118.4 1548.4,1125.5C1546.9,1132.5 1546.6,1137.7 1544.8,1143.9C1542.9,1150.0 1540.5,1156.1 1537.4,1162.2C1534.3,1168.4 1530.0,1174.8 1526.4,1180.6C1522.7,1186.5 1519.6,1192.0 1515.3,1197.2C1511.0,1202.4 1506.1,1207.3 1500.6,1211.9C1495.1,1216.5 1488.4,1221.4 1482.2,1224.8C1476.1,1228.1 1470.0,1230.3 1463.9,1232.1C1457.7,1233.9 1451.6,1233.9 1445.5,1235.8C1439.3,1237.6 1432.2,1239.7 1427.1,1243.1C1422.0,1246.6 1418.0,1252.1 1414.9,1256.5C1411.8,1260.8 1409.9,1264.4 1408.5,1269.2C1407.2,1274.0 1406.7,1279.8 1406.9,1285.1C1407.2,1290.5 1409.1,1295.8 1410.1,1301.1C1411.2,1306.4 1413.3,1311.7 1413.3,1317.0C1413.3,1322.3 1412.0,1327.6 1410.1,1332.9C1408.3,1338.2 1404.8,1344.4 1402.2,1348.9C1399.5,1353.4 1396.8,1357.1 1394.2,1360.0C1391.5,1362.9 1388.6,1364.3 1386.2,1366.4C1383.8,1368.5 1381.7,1370.1 1379.9,1372.8C1378.0,1375.4 1377.2,1379.9 1375.1,1382.3C1372.9,1384.7 1369.8,1386.8 1367.1,1387.1C1364.5,1387.4 1360.7,1385.8 1359.1,1383.9C1357.5,1382.1 1359.4,1378.1 1357.5,1376.0C1355.7,1373.8 1349.8,1373.6 1348.0,1371.2C1346.1,1368.8 1348.5,1364.3 1346.4,1361.6C1344.3,1359.0 1339.8,1357.9 1335.2,1355.2C1330.7,1352.6 1325.2,1348.9 1319.3,1345.7C1313.5,1342.5 1306.6,1339.0 1300.2,1336.1C1293.8,1333.2 1286.4,1330.0 1281.1,1328.2C1275.8,1326.3 1272.6,1325.2 1268.3,1325.0C1264.1,1324.7 1259.3,1325.2 1255.6,1326.6C1251.9,1327.9 1248.7,1329.8 1246.0,1332.9C1243.4,1336.1 1241.0,1341.4 1239.7,1345.7C1238.3,1349.9 1237.5,1355.0 1238.1,1358.4C1238.6,1361.9 1240.5,1364.3 1242.8,1366.4C1245.2,1368.5 1249.5,1369.3 1252.4,1371.2C1255.3,1373.0 1258.5,1374.9 1260.4,1377.5C1262.2,1380.2 1263.8,1384.2 1263.6,1387.1C1263.3,1390.0 1259.8,1392.4 1258.8,1395.1C1257.7,1397.7 1258.2,1400.6 1257.2,1403.0C1256.1,1405.4 1254.8,1408.1 1252.4,1409.4C1250.0,1410.7 1245.2,1409.7 1242.8,1411.0C1240.5,1412.3 1240.2,1416.8 1238.1,1417.4C1235.9,1417.9 1232.5,1413.9 1230.1,1414.2C1227.7,1414.5 1225.5,1417.0 1223.7,1419.0C1222.0,1421.0 1221.1,1425.6 1219.7,1426.1C1218.4,1426.7 1218.0,1424.1 1215.8,1422.2C1213.5,1420.2 1209.1,1417.1 1206.2,1414.2C1203.3,1411.3 1201.2,1408.1 1198.2,1404.6C1195.3,1401.2 1190.7,1397.5 1188.7,1393.5C1186.7,1389.5 1186.3,1385.0 1186.3,1380.7C1186.3,1376.5 1187.7,1372.2 1188.7,1368.0C1189.6,1363.7 1191.6,1359.0 1191.9,1355.2C1192.1,1351.5 1189.7,1348.6 1190.3,1345.7C1190.8,1342.8 1192.4,1340.4 1195.0,1337.7C1197.7,1335.1 1203.0,1333.2 1206.2,1329.8C1209.4,1326.3 1211.8,1321.8 1214.2,1317.0C1216.6,1312.2 1218.9,1305.9 1220.5,1301.1C1222.1,1296.3 1223.2,1292.6 1223.7,1288.3C1224.3,1284.1 1222.9,1279.3 1223.7,1275.6C1224.5,1271.9 1225.8,1268.3 1228.5,1266.0C1231.2,1263.8 1235.7,1262.3 1239.7,1262.0C1243.6,1261.8 1248.7,1262.8 1252.4,1264.4C1256.1,1266.0 1260.1,1270.8 1262.0,1271.6C1263.8,1272.4 1263.6,1271.2 1263.6,1269.2C1263.6,1267.2 1262.5,1263.1 1262.0,1259.7C1261.4,1256.2 1260.1,1252.8 1260.4,1248.5C1260.6,1244.3 1262.5,1238.4 1263.6,1234.2C1264.6,1229.9 1265.1,1225.8 1266.7,1223.0C1268.3,1220.2 1270.5,1218.2 1273.1,1217.4C1275.8,1216.6 1279.5,1217.3 1282.7,1218.2C1285.9,1219.2 1289.8,1220.9 1292.2,1223.0C1294.6,1225.1 1296.5,1228.1 1297.0,1231.0C1297.5,1233.9 1296.2,1237.4 1295.4,1240.5C1294.6,1243.7 1292.2,1246.4 1292.2,1250.1C1292.2,1253.8 1293.6,1258.9 1295.4,1262.8C1297.3,1266.8 1300.6,1271.9 1303.4,1274.0C1306.2,1276.1 1310.8,1279.3 1312.1,1275.6C1313.5,1271.9 1311.7,1259.7 1311.3,1251.7C1310.9,1243.7 1310.3,1235.8 1309.8,1227.8C1309.2,1219.8 1308.4,1211.9 1308.2,1203.9C1307.9,1195.9 1308.3,1182.0 1308.2,1180.0C1308.1,1178.0 1306.8,1192.5 1307.6,1191.7C1308.4,1190.8 1310.9,1180.0 1313.1,1175.1C1315.2,1170.2 1315.9,1165.3 1320.4,1162.2C1325.0,1159.2 1334.9,1158.6 1340.7,1156.7C1346.5,1154.9 1352.3,1154.6 1355.4,1151.2C1358.4,1147.8 1357.2,1141.7 1359.1,1136.5C1360.9,1131.3 1363.0,1125.2 1366.4,1120.0C1369.8,1114.7 1375.0,1109.2 1379.3,1105.2C1383.6,1101.3 1389.4,1100.3 1392.2,1096.1C1394.9,1091.8 1394.9,1085.0 1395.8,1079.5C1396.7,1074.0 1397.1,1069.1 1397.7,1063.0C1398.3,1056.8 1400.1,1047.6 1399.5,1042.7C1398.9,1037.8 1396.7,1036.9 1394.0,1033.5C1391.2,1030.2 1386.0,1026.5 1383.0,1022.5C1379.9,1018.5 1379.9,1013.0 1375.6,1009.6C1371.3,1006.3 1361.8,1006.0 1357.2,1002.3C1352.6,998.6 1350.2,994.6 1348.0,987.6C1345.9,980.5 1345.1,964.4 1344.4,960.0C1343.6,955.6 1346.1,961.8 1343.5,961.1C1341.0,960.3 1331.0,959.2 1328.8,955.6C1326.7,951.9 1330.4,944.8 1330.7,939.0C1331.0,933.2 1331.9,925.8 1330.7,920.6C1329.4,915.4 1325.2,913.9 1323.3,907.8C1321.5,901.6 1321.5,890.9 1319.6,883.9C1317.8,876.8 1315.0,870.7 1312.3,865.5C1309.5,860.3 1306.2,858.7 1303.1,852.6C1300.0,846.5 1296.4,837.0 1293.9,828.7C1291.5,820.4 1289.6,811.2 1288.4,803.0C1287.2,794.7 1285.9,786.1 1286.5,779.1C1287.2,772.0 1290.5,767.7 1292.1,760.7C1293.6,753.6 1295.4,743.8 1295.7,736.8C1296.0,729.7 1289.9,722.7 1293.9,718.4C1297.9,714.0 1313.5,713.6 1320.0,710.6C1326.5,707.6 1328.5,703.4 1332.7,700.4C1337.0,697.4 1341.7,695.2 1345.5,692.7C1349.3,690.2 1353.0,687.6 1355.7,685.1C1358.5,682.6 1361.6,680.3 1362.0,677.5C1362.4,674.7 1359.9,671.0 1358.2,668.5C1356.5,666.0 1354.4,664.1 1351.9,662.2C1349.4,660.3 1345.8,658.9 1343.0,657.0C1340.2,655.1 1336.0,652.4 1335.3,650.7C1334.6,649.0 1337.0,648.4 1339.1,646.9C1341.2,645.4 1346.1,644.3 1348.0,641.8C1349.9,639.2 1350.8,635.0 1350.6,631.6C1350.4,628.2 1347.6,624.2 1346.8,621.4C1346.0,618.6 1345.0,616.6 1345.5,614.7Z" fill="none" stroke="#2b2e30" stroke-width="2.5" stroke-opacity="0.7"/>
</g>
</g>
<path d="M1511,609 h9 v-5 h-6 z" fill="#e8ecf1"/>
<circle cx="1137.6" cy="1114.3" r="8.6" fill="#fff" stroke="#000" stroke-width="3.2"/><circle cx="1137.6" cy="1114.3" r="3.6" fill="#000"/>
</svg>
</div>
<div id="hdr">
<span class="t" style="left:1.5px;top:-6.68px;font-size:35px;line-height:40.22px;color:#5e5e5e;transform:scaleX(1.0201);-webkit-text-stroke:1.1px #fafafa;">onshape</span>
<span class="t" style="left:221px;top:-8.63px;font-size:46px;line-height:52.85px;color:#333;font-weight:bold;transform:scaleX(0.9655);">prow-merged.stl</span>
<span class="t" style="left:581.6px;top:5.85px;font-size:30px;line-height:34.47px;color:#999;transform:scaleX(1.0457);">Main</span>
<span class="t" style="left:838px;top:0.75px;font-size:29px;line-height:33.32px;color:#333;transform:scaleX(0.9486);">0</span>
<span class="t" style="left:933.4px;top:0.75px;font-size:29px;line-height:33.32px;color:#333;transform:scaleX(0.9486);">0</span>
<span class="t" style="left:1027.4px;top:0.75px;font-size:29px;line-height:33.32px;color:#333;transform:scaleX(0.9486);">0</span>
<svg class="ic" style="left:0;top:0" width="2044" height="56" viewBox="0 0 2044 56" fill="none" stroke="#333" stroke-linecap="round" stroke-linejoin="round">
<!-- hamburger -->
<g fill="#333" stroke="none"><rect x="166" y="2.4" width="32" height="5.6"/><rect x="166" y="14" width="32" height="5.6"/><rect x="166" y="25.8" width="32" height="5.8"/></g>
<!-- link -->
<g transform="translate(692,17.8) rotate(-45)" stroke-width="3.4">
<path d="M-3,-5.2 H-10 a5.2,5.2 0 0 0 0,10.4 H-2 a5.2,5.2 0 0 0 4.4,-2.4"/>
<path d="M3,5.2 H10 a5.2,5.2 0 0 0 0,-10.4 H2 a5.2,5.2 0 0 0 -4.4,2.4"/>
</g>
<!-- globe -->
<circle cx="750" cy="15.8" r="17.2" stroke-width="1.9"/>
<g fill="#333" stroke="none">
<path d="M739.5,1.5 C737.5,6 739,11 742,14.5 C741.5,11.5 743.5,10.5 745.5,11 L747.5,14 C749,10 751,6.5 755,4 L752.5,3.2 L749,5.5 L748.5,1 C745.5,-0.5 742,0 739.5,1.5 Z"/>
<path d="M745,17 C747.5,20 749,22 750.5,27 L751.5,31.5 C754.5,29.5 758,26 760,22.5 C757.5,19 754,17 751,17.5 C749,18.5 747,18.5 745,17 Z"/>
<path d="M765,9.5 C763,11 763,13.5 765,16 L767,19 C767.4,15.5 766.8,12.5 765,9.5 Z"/>
</g>
<!-- copy -->
<g stroke-width="3.4" stroke-linecap="butt" stroke-linejoin="miter">
<path d="M794,3.6 H791.7 V28.2 H802"/>
<path d="M812.5,3.6 H814 V8"/>
<path d="M798,-2 V3.4 H808 V-2" stroke-width="2.6"/>
<path d="M803.8,10 H814 L822.2,18 V30 H803.8 Z" fill="#fafafa"/>
<path d="M814,10 V18.5 H822" stroke-width="2.6"/>
</g>
<!-- version dots -->
<g fill="#333" stroke="none"><circle cx="900.1" cy="15.9" r="6"/><rect x="898.2" y="-2" width="3.9" height="3.8"/><rect x="898.2" y="4.4" width="3.9" height="3.4"/><rect x="898.2" y="24.2" width="3.9" height="3.4"/><rect x="898.2" y="30.3" width="3.9" height="3.5"/></g>
<!-- thumb -->
<path stroke-width="3" d="M996.9,-3 C997,2 994.5,7 988.2,13.2 H979.9 V30.5 H988 C993,32 998,33.2 1003,33.2 C1006.5,33.2 1008.8,31.8 1009.5,28.5 L1012.3,15.5 C1013,12.5 1011,9.8 1007.8,9.8 H1000.8 C1003,5.5 1003.5,1 1002.5,-3"/>
</svg>

</div>
<div id="tb">
<div class="sep" style="left:160px"></div>
<div class="sep" style="left:337px"></div>
<div class="sep" style="left:721px"></div>
<div class="sep" style="left:1277.5px"></div>
<div class="sep" style="left:1457px"></div>
<div class="sep" style="left:1773px"></div>
<div class="hl"></div>
<span class="t" style="left:229px;top:21.56px;font-size:27px;line-height:31.02px;color:#333;transform:scaleX(1.0055);">Sketch</span>
<svg class="ic" style="left:0;top:0" width="2044" height="72" viewBox="0 0 2044 72">
<path d="M40,31.7 L51.8,20.2 V27.8 C60,27.8 66.5,32 66.7,39.5 C66.8,43.5 65,47.5 62.6,50.7 C64.5,42 60,36.3 51.8,36.2 V43.9 Z" fill="#333"/>
<path d="M40,31.7 L51.8,20.2 V27.8 C60,27.8 66.5,32 66.7,39.5 C66.8,43.5 65,47.5 62.6,50.7 C64.5,42 60,36.3 51.8,36.2 V43.9 Z" fill="#999" transform="translate(178,0) scale(-1,1)"/>
<g fill="none" stroke="#2b2b2b" stroke-width="2" stroke-linejoin="round"><path d="M209.9,19.8 L216.3,26 L196.7,46 L185,51.4 L190.1,39.9 Z"/><path d="M190.1,39.9 L196.7,46 M187.6,45.5 L190.6,48.6"/></g>
<rect x="182.1" y="52" width="35.9" height="2" fill="#2447ad"/>
<g transform="translate(360,18)"><path d="M1,1.2 H29.3 L35,6.6 V35 H6.6 L1,29.8 Z" fill="#fff" stroke="#2b2b2b" stroke-width="2"/><path d="M7.4,35 V6.6 H35" fill="none" stroke="#999" stroke-width="1.2"/><path d="M1,1.2 L7,6.6" stroke="#2b2b2b" stroke-width="1"/><path d="M12.6,12.6 H29.8 L34.2,16.8 V34.2 H17.8 L12.6,29.2 Z" fill="#999" stroke="#444" stroke-width="1.3"/><path d="M12.6,12.6 L17.8,17.6 H34 M17.8,17.6 V34" fill="none" stroke="#666" stroke-width="1.2"/></g>
<g transform="translate(428,18)"><path d="M30.6,6.9 A16.9,16.9 0 1 0 30.6,30.9 L22.8,22.6 A5.6,5.6 0 1 1 22.8,15.2 Z" fill="#999" stroke="#2b2b2b" stroke-width="2" stroke-linejoin="round"/><ellipse cx="26.9" cy="10.6" rx="5.8" ry="3.2" transform="rotate(-42 26.9 10.6)" fill="#fff" stroke="#2b2b2b" stroke-width="1.6"/><ellipse cx="26.9" cy="27.2" rx="5.8" ry="3.2" transform="rotate(42 26.9 27.2)" fill="#fff" stroke="#2b2b2b" stroke-width="1.6"/><path d="M1.5,18.9 H36" stroke="#2b2b2b" stroke-width="1.7" stroke-dasharray="4.2,2.6" fill="none"/></g>
<g transform="translate(496,18)"><path d="M24.7,5 V8.5 C24.7,11.5 23,12.6 19,12.6 H14.5 C6,12.6 1,19.5 1,28 V31.5 C1,34.5 3.5,36.6 7,36.6 C10.5,36.6 13,34.5 13,31.5 V30 C13,26.5 15.5,25.2 19.5,25.2 H23 C31.5,25.2 37,18 37,9 V5 Z" fill="#999" stroke="#2b2b2b" stroke-width="2"/><ellipse cx="30.9" cy="5" rx="6.2" ry="4.2" fill="#fff" stroke="#2b2b2b" stroke-width="1.8"/></g>
<g transform="translate(564,18)"><path d="M7.6,4.6 C7.6,14 5,23 1.2,31.2 L18,36.2 L35,31.2 C31,23 28.6,14 28.6,4.6 Z" fill="#999" stroke="#2b2b2b" stroke-width="2" stroke-linejoin="round"/><ellipse cx="18.1" cy="4.7" rx="10.5" ry="3.9" fill="#fff" stroke="#2b2b2b" stroke-width="1.9"/></g>
<g transform="translate(632,18)"><path d="M1,6.6 C7,6.6 10,5 14,3 C18,1 22,0.8 27.6,0.9 L35,8.2 V29 C28,29 24,31 20,33 C16.5,34.8 14,35.2 10.4,35.2 L1,27.4 Z" fill="#999" stroke="#2b2b2b" stroke-width="2" stroke-linejoin="round"/><path d="M1,6.6 C7,6.6 10,5 14,3 C18,1 22,0.8 27.6,0.9 L35,8.2 C29,8.4 25,9.5 21,11.5 C17,13.2 14,13.8 10.4,13.8 Z" fill="#fff" stroke="#2b2b2b" stroke-width="1.6" stroke-linejoin="round"/><path d="M10.4,13.8 V35" stroke="#2b2b2b" stroke-width="1.6"/><path d="M20,10 H24.3 V17.9 H30.6 L22.1,28.4 L13.7,17.9 H20 Z" fill="#2b2b2b" stroke="#fff" stroke-width="1.4" stroke-linejoin="miter"/></g>
<path d="M691,31.4 l9,9 l9,-9" fill="none" stroke="#333" stroke-width="4.1" stroke-linecap="round" stroke-linejoin="round"/>
<g transform="translate(744,18)"><path d="M14,1.2 H30 L35,6.2 V35 H6.6 L1.2,29.8 V14.6 C1.2,7 7,1.2 14,1.2 Z" fill="#fff" stroke="#2b2b2b" stroke-width="2.2"/><path d="M1.4,14.6 C1.4,7 7,1.6 15.6,1.6 L20.4,6.6 C12.5,6.6 7.2,12 7.2,19.8 Z" fill="#999" stroke="#2b2b2b" stroke-width="1.6" stroke-linejoin="round"/><path d="M20.4,6.6 H34.6 M7.2,19.8 V35" fill="none" stroke="#888" stroke-width="1.2"/><path d="M30,1.2 L35,6.4" stroke="#2b2b2b" stroke-width="1.2"/></g>
<path d="M803,31.4 l9,9 l9,-9" fill="none" stroke="#333" stroke-width="4.1" stroke-linecap="round" stroke-linejoin="round"/>
<g transform="translate(848,18)"><path d="M14.6,1.2 H30.2 L35,5.8 V35 H6.4 L1.2,29.8 V13.4 Z" fill="#fff" stroke="#2b2b2b" stroke-width="2.2"/><path d="M2.4,14.2 L15.2,2.2 L19.6,6.6 L6.6,19.6 Z" fill="#999" stroke="#2b2b2b" stroke-width="1.4"/><path d="M1.6,13.6 L15,1.4" stroke="#2b2b2b" stroke-width="3.2"/><path d="M19.6,6.6 H34.6 M6.6,19.6 V35 M30.2,1.2 L35,6.2" fill="none" stroke="#2b2b2b" stroke-width="1.2"/></g>
<g transform="translate(916,18)"><path d="M14.6,1.2 H30.4 L35,5 V35 H7.6 L1.2,28.6 Z" fill="#999" stroke="#2b2b2b" stroke-width="2.2" stroke-linejoin="round"/><path d="M14.6,1.2 H30.4 L35,5 L19.4,5.6 Z" fill="#fff" stroke="#2b2b2b" stroke-width="1.4" stroke-linejoin="round"/><path d="M19.4,5.6 L7.6,35" stroke="#2b2b2b" stroke-width="1.2"/></g>
<path d="M975,31.4 l9,9 l9,-9" fill="none" stroke="#333" stroke-width="4.1" stroke-linecap="round" stroke-linejoin="round"/>
<g transform="translate(1020,18)"><path d="M19.8,1.2 H27.6 L35,8.4 V35 H8.4 L1.2,28.2 V20 H6.8 L19.8,7.4 Z" fill="#fff" stroke="#2b2b2b" stroke-width="2.2"/><path d="M8.4,24.6 H25.4 V8.2 Z" fill="#999" stroke="#666" stroke-width="1"/><path d="M6.6,20.6 L19.6,7.8" stroke="#444" stroke-width="3"/><path d="M8.8,27 H27.2 V9.6 H34.6 M8.8,27 V35 M1.6,20.2 L8.8,27 M19.8,1.4 L27.2,9.6" fill="none" stroke="#2b2b2b" stroke-width="1.3"/></g>
<g transform="translate(1088,18)"><path d="M1,1.2 H30.6 L35,5.4 V35 H5.8 L1,30 Z" fill="#fff" stroke="#2b2b2b" stroke-width="2.2"/><path d="M11.6,4.2 H25.4 L29.6,7 V29.6 H11.6 Z" fill="#999" stroke="#2b2b2b" stroke-width="1.4"/><path d="M25.4,4.2 V25.6 H11.6 M25.4,25.6 L29.6,29.6" fill="none" stroke="#555" stroke-width="1.2"/><path d="M6.6,35 V6.6 H11.6 M29.6,6.6 H34.6 M1.4,1.6 L6.6,6.6 M8.5,4.2 H11.6" fill="none" stroke="#2b2b2b" stroke-width="1.2"/></g>
<g transform="translate(1156,18)"><path d="M1.2,1.2 H29.6 L35.2,6 V35 H6.6 L1.2,30 Z" fill="#fff" stroke="#2b2b2b" stroke-width="2.2"/><path d="M7.4,35 V6.4 H35 M1.4,1.4 L7.4,6.4" fill="none" stroke="#2b2b2b" stroke-width="1.2"/><circle cx="21" cy="20.9" r="10.4" fill="#999" stroke="#444" stroke-width="1.4"/><path d="M12.6,25.6 C16,31 25,31.5 29.6,25 M12,18 C12,26 22,28.5 25.6,20.5" fill="none" stroke="#555" stroke-width="1.1"/><ellipse cx="17.2" cy="16.6" rx="4.4" ry="3.6" transform="rotate(-35 17.2 16.6)" fill="#fff" stroke="#444" stroke-width="1.1"/></g>
<g transform="translate(1224,18)"><path d="M7.2,5 V30.4 C7.2,33 12,35.2 18.1,35.2 C24.2,35.2 29,33 29,30.4 V5" fill="#fff" stroke="#2b2b2b" stroke-width="2"/><path d="M7.4,8.6 C10,12.2 26.4,12.2 28.8,8.6 V23 C26.4,26.6 10,26.6 7.4,23 Z" fill="#999"/><path d="M7.4,12.2 C10,15.8 26.4,15.8 28.8,12.2" fill="none" stroke="#444" stroke-width="1.3"/><path d="M7.4,15.8 C10,19.4 26.4,19.4 28.8,15.8" fill="none" stroke="#444" stroke-width="1.3"/><path d="M7.4,19.4 C10,23 26.4,23 28.8,19.4" fill="none" stroke="#444" stroke-width="1.3"/><path d="M7.4,23 C10,26.6 26.4,26.6 28.8,23" fill="none" stroke="#444" stroke-width="1.3"/><path d="M7.2,5 V30.4 M29,5 V30.4" stroke="#2b2b2b" stroke-width="2"/><ellipse cx="18.1" cy="5" rx="10.9" ry="4.3" fill="#fff" stroke="#2b2b2b" stroke-width="2"/></g>
<g transform="translate(1300,18)"><path d="M1,1 h14 l3.6,3.6 v14 h-14 l-3.6,-3.6 Z" fill="#fff" stroke="#2b2b2b" stroke-width="2" stroke-linejoin="miter"/><path d="M1,1 l4,4 h13.4 M5,5 v13.4" fill="none" stroke="#555" stroke-width="1.1"/><path d="M17.6,1 h14 l3.6,3.6 v14 h-14 l-3.6,-3.6 Z" fill="#999" stroke="#2b2b2b" stroke-width="2" stroke-linejoin="miter"/><path d="M17.6,1 l4,4 h13.4 M21.6,5 v13.4" fill="none" stroke="#555" stroke-width="1.1"/><path d="M1,17.6 h14 l3.6,3.6 v14 h-14 l-3.6,-3.6 Z" fill="#999" stroke="#2b2b2b" stroke-width="2" stroke-linejoin="miter"/><path d="M1,17.6 l4,4 h13.4 M5,21.6 v13.4" fill="none" stroke="#555" stroke-width="1.1"/><path d="M17.6,17.6 h14 l3.6,3.6 v14 h-14 l-3.6,-3.6 Z" fill="#999" stroke="#2b2b2b" stroke-width="2" stroke-linejoin="miter"/><path d="M17.6,17.6 l4,4 h13.4 M21.6,21.6 v13.4" fill="none" stroke="#555" stroke-width="1.1"/></g>
<path d="M1359,31.4 l9,9 l9,-9" fill="none" stroke="#333" stroke-width="4.1" stroke-linecap="round" stroke-linejoin="round"/>
<g transform="translate(1404,18)"><path d="M12.4,0.4 L21.6,10.6 V35 L19,35 V18 L12.4,8 Z" fill="#ccc"/><path d="M1,1.2 H7.4 L13,7.2 V24 H18.6 V35 H6.4 L1,29.8 Z" fill="#fff" stroke="#2b2b2b" stroke-width="2"/><path d="M7.8,35 V7.6 H12.6 M1.2,1.4 L7.8,7.6 M13,19.4 L18.4,24.4 M7.8,24.4 H13" fill="none" stroke="#2b2b2b" stroke-width="1.3"/><path d="M22.4,1.2 H30 L35.4,6.8 V35 H22.4 V22.6 H23.6 V1.2 Z" fill="#999" stroke="#2b2b2b" stroke-width="2"/><path d="M24,2 L30,8 H35 M30,8 V24.4 H23.4" fill="none" stroke="#2b2b2b" stroke-width="1.3"/></g>
<g transform="translate(1479,18)"><circle cx="25.1" cy="18.2" r="11.9" fill="#999"/><circle cx="13" cy="18.2" r="11.9" fill="#fff"/><path d="M19.05,7.95 A11.9,11.9 0 0 1 19.05,28.45 A11.9,11.9 0 0 1 19.05,7.95 Z" fill="#999"/><circle cx="13" cy="18.2" r="11.9" fill="none" stroke="#2b2b2b" stroke-width="2"/><circle cx="25.1" cy="18.2" r="11.9" fill="none" stroke="#2b2b2b" stroke-width="2"/></g>
<g transform="translate(1547,18)"><path d="M1.6,3 H31.8 L36,8.4 V33 H9.4 L1.6,27.6 Z" fill="#fff" stroke="#2b2b2b" stroke-width="2.2"/><path d="M9.8,33 V9.4 H35.6 M1.8,3.2 L9.8,9.4" fill="none" stroke="#2b2b2b" stroke-width="1.4"/><path d="M-0.6,15.6 C4,19 6,24.6 12,25 C20,25.6 24,18.6 31,18.2 C34,18 36.5,18.6 38.4,19.4" fill="none" stroke="#fff" stroke-width="4.4"/><path d="M-0.6,15.6 C4,19 6,24.6 12,25 C20,25.6 24,18.6 31,18.2 C34,18 36.5,18.6 38.4,19.4" fill="none" stroke="#aaa" stroke-width="1.6"/></g>
<g transform="translate(1615,18)"><path d="M1.6,16.6 H16.6 L20.2,20.6 V35.2 H5.6 L1.6,31.2 Z" fill="#fff" stroke="#2b2b2b" stroke-width="2"/><path d="M6.2,35 V21.4 H20 M1.8,16.8 L6.2,21.4" fill="none" stroke="#2b2b2b" stroke-width="1.2"/><path d="M26,0.8 L35,8.8 V15.8 L26,23.4 L17,15.8 V8.8 Z" fill="#999" stroke="#444" stroke-width="1.5" stroke-linejoin="round"/><path d="M17.4,8.8 L26,13.6 L34.6,8.8 M26,13.6 V23" fill="none" stroke="#777" stroke-width="1.1"/><path d="M5.4,15 C5.4,10.5 7.6,7 11.6,4.6" fill="none" stroke="#2b2b2b" stroke-width="2.8"/><path d="M7,0.2 H18.8 L13.6,8.4 Z" fill="#2b2b2b"/><path d="M35.6,21 C35.8,25 33.6,29 29.8,31.6" fill="none" stroke="#2b2b2b" stroke-width="2.8"/><path d="M23.2,35.4 H34.8 L28,27.6 Z" fill="#2b2b2b"/></g>
<path d="M1675,31.4 l9,9 l9,-9" fill="none" stroke="#333" stroke-width="4.1" stroke-linecap="round" stroke-linejoin="round"/>
<g transform="translate(1720,18)"><path d="M3.4,2.2 H27.8 L31.6,5.8 H7 Z M2,4.2 L5.8,7.8 V31.8 L2,28.2 Z M8,8.2 H31.7 V31.8 H8 Z" fill="#999"/><circle cx="26.1" cy="26.2" r="10.9" fill="#fff"/><circle cx="26.1" cy="26.2" r="9.7" fill="#2f2f2f"/><path d="M22.3,22.4 l7.6,7.6 m0,-7.6 l-7.6,7.6" stroke="#fff" stroke-width="2.7" stroke-linecap="round" fill="none"/></g>
<g transform="translate(1796,18)"><path d="M-1.8,24 C0,13 8,2 24.2,-1 L33.6,8.8 C22,9 13,15 11.6,22 L7.4,34.4 Z" fill="#999"/><path d="M22.2,16 L31,12.8 L37.4,19.6 C30,21.6 24,28 20.8,37.4 L13.6,30.2 C15,26.5 15.6,24.6 17.2,22.6 Z" fill="#fff" stroke="#2b2b2b" stroke-width="1.7" stroke-linejoin="round"/><path d="M10.8,11 L22.2,12.4 L19.4,15.4 L25.8,21.8 L22,25.6 L15.6,19.2 L12.4,22.4 Z" fill="#2b2b2b" stroke="#fff" stroke-width="1.2" stroke-linejoin="round"/></g>
<g transform="translate(1864,18)"><path d="M-0.6,9 C6,9 10,6 14,3 C18,0 24,-0.4 28.4,1.4 C30,7 32,13 36.4,16.6 C30,15 24,17 20,20 C17,22.5 14,26 9.6,26.8 Z" fill="#999"/><circle cx="26" cy="26.2" r="10.9" fill="#fff"/><circle cx="26" cy="26.2" r="9.7" fill="#2f2f2f"/><path d="M22.2,22.4 l7.6,7.6 m0,-7.6 l-7.6,7.6" stroke="#fff" stroke-width="2.7" stroke-linecap="round" fill="none"/></g>
<g transform="translate(1932,18)"><path d="M0.8,16.6 C6,16.4 10,15.4 14,13.4 C18,11.6 23,11.2 26.6,11.6 C29.5,12.2 31.5,16 35,20.2 V35 H8 L0.8,28.6 Z" fill="#fff" stroke="#2b2b2b" stroke-width="2.2" stroke-linejoin="round"/><path d="M0.8,16.6 C6,16.4 10,15.4 14,13.4 C18,11.6 23,11.2 26.6,11.6 C29.5,12.2 31.5,16 35,20.2 C29,20.4 25,21.6 21,23.4 C17,25.2 13,26 8.6,25.8 Z" fill="#999" stroke="#2b2b2b" stroke-width="1.5" stroke-linejoin="round"/><path d="M8.6,25.8 V35" stroke="#2b2b2b" stroke-width="1.4"/><path d="M17.9,1.2 L25,10 H20.8 V18.6 H15 V10 H10.8 Z" fill="#2b2b2b" stroke="#fff" stroke-width="1.4"/></g>
<g transform="translate(2000,18)"><path d="M0.4,5.8 C6,6 10,4.6 14,2.6 C18,0.8 23,0 27.4,0.6 C30,4 32,7.5 35.6,10.4 C30,10.2 26,11.4 22,13.4 C18,15.4 13,16.6 8.6,16.4 C6,13 3,9 0.4,5.8 Z" fill="#999"/><path d="M1,16.6 H28.6 L35.2,22.6 V35 H8.8 L1,28.6 Z" fill="#fff" fill-opacity="0" stroke="#2b2b2b" stroke-width="2.2"/><path d="M9.2,35 V23 H35 M1.2,16.8 L9.2,23" fill="none" stroke="#2b2b2b" stroke-width="1.4"/></g>
</svg>
</div>
<div id="lstrip"></div>
<div id="panel"></div>
<div id="flt"></div>
<span class="t" style="left:111px;top:161.47px;font-size:26px;line-height:29.87px;color:#8a8a8a;font-style:italic;transform:scaleX(0.9903);">Filter by name or type</span>
<span class="t" style="left:28px;top:220.47px;font-size:26px;line-height:29.87px;color:#333;font-weight:bold;transform:scaleX(0.9770);">Features (5)</span>
<span class="t" style="left:65.5px;top:276.50px;font-size:26.3px;line-height:30.22px;color:#333;transform:scaleX(1.0186);">Default geometry</span>
<span class="t" style="left:109.5px;top:328.20px;font-size:26.3px;line-height:30.22px;color:#333;transform:scaleX(0.9978);">Origin</span>
<span class="t" style="left:110.5px;top:380.20px;font-size:26.3px;line-height:30.22px;color:#333;transform:scaleX(1.0258);">Top</span>
<span class="t" style="left:109.5px;top:431.90px;font-size:26.3px;line-height:30.22px;color:#333;transform:scaleX(1.0426);">Front</span>
<span class="t" style="left:109.5px;top:484.00px;font-size:26.3px;line-height:30.22px;color:#333;transform:scaleX(1.0098);">Right</span>
<span class="t" style="left:71px;top:536.20px;font-size:26.3px;line-height:30.22px;color:#333;transform:scaleX(1.0210);">Import 1</span>
<div id="bar"></div>
<div id="psep"></div>
<span class="t" style="left:65.3px;top:1126.20px;font-size:26.3px;line-height:30.22px;color:#333;transform:scaleX(0.9917);">Parts (2)</span>
<span class="t" style="left:110px;top:1178.00px;font-size:26.3px;line-height:30.22px;color:#333;transform:scaleX(0.9955);">Lion</span>
<span class="t" style="left:110px;top:1230.00px;font-size:26.3px;line-height:30.22px;color:#333;transform:scaleX(1.0180);">Prow</span>
<svg class="ic" style="left:0;top:128px" width="440" height="1504" viewBox="0 128 440 1504" fill="none" stroke-linecap="butt" stroke-linejoin="miter">
<!-- filter funnel -->
<path d="M44.2,163.4 H69.8 L59.2,178.4 V190 L54.9,186.6 V178.4 Z" stroke="#333" stroke-width="2"/>
<!-- folder plus -->
<g stroke="#333" stroke-width="1.6">
<path d="M233.2,236 V222.7 H246 L248.6,226.4 H267 V249 H247.5"/>
<path d="M233.2,244.5 V249 H237.5"/>
</g>
<path d="M241.8,231.6 V247.6 M233.8,239.6 H249.8" stroke="#2b50b8" stroke-width="3.6"/>
<!-- pause -->
<rect x="297.8" y="221.8" width="8.2" height="28" fill="#333"/><rect x="313.8" y="221.8" width="8.2" height="28" fill="#333"/>
<!-- timer -->
<circle cx="369.9" cy="237.3" r="14.4" stroke="#333" stroke-width="3.4"/>
<path d="M364.6,219.4 H375.4 M370,219.4 V223 M380.6,227.2 L384,224.2" stroke="#333" stroke-width="2.4"/>
<path d="M368.6,237.2 L375.4,244" stroke="#333" stroke-width="2.2"/>
<!-- chevrons -->
<path d="M30.3,284.6 L40.2,294.4 L50.1,284.6" stroke="#666" stroke-width="3.6" stroke-linecap="round" stroke-linejoin="round"/>
<path d="M30.1,1134.8 L40,1144.6 L49.9,1134.8" stroke="#666" stroke-width="3.6" stroke-linecap="round" stroke-linejoin="round"/>
<!-- tree line -->
<path d="M39,316.3 V523 M30.3,523 H49" stroke="#d2d2d2" stroke-width="1.8"/>
<!-- origin -->
<circle cx="85" cy="341" r="6.6" stroke="#555" stroke-width="1.1"/><circle cx="85" cy="341" r="2.6" fill="#555"/>
<!-- planes -->
<g id="pl" stroke="#555" stroke-width="1.2"><path d="M71.9,378.4 L100.2,382.9 V407.5 L71.9,403.1 Z" fill="#dedede"/><path d="M85.8,380.8 V394.3 L99.8,396.5"/></g>
<use href="#pl" y="52"/><use href="#pl" y="104"/>
<!-- import -->
<g stroke="#555" stroke-width="1.3" stroke-linejoin="round">
<path d="M47.3,534.4 H55.6 L61.7,540.2 V563.2 H39.5 L32.5,556 V548.3 H47.3 Z" fill="#fff"/>
<path d="M47.3,534.4 L53.1,540.2 H61.7 M53.1,540.2 V554.9 H39.5 L32.5,548.3 M39.5,554.9 V563.2 M53.1,554.9 L47.3,548.3"/>
</g>
<path d="M32.4,535 C39,534.6 43.6,536 44.4,542" stroke="#555" stroke-width="2.3"/>
<path d="M37.6,541.6 H51.2 L44.4,549.2 Z" fill="#555"/>
<!-- mesh part icons -->
<g id="ms" stroke="#555" stroke-width="1.2" stroke-linejoin="round">
<path d="M83.7,1176.6 H93.2 L99.6,1182.4 V1205.2 H76.8 L70.4,1199 V1190.1 H83.7 Z"/>
<path d="M83.7,1176.6 L90.9,1182.4 H99.6 M90.9,1182.4 V1197.1 H77.7 L70.4,1190.1 M77.7,1197.1 V1205.2 M93.2,1176.6 L90.9,1182.4 M83.7,1190.1 L90.9,1182.4 M83.7,1190.1 L90.9,1197.1 M77.7,1197.1 L83.7,1190.1 M70.4,1199 L77.7,1197.1 M99.6,1205.2 L90.9,1182.4 M99.6,1205.2 L77.7,1197.1 M99.6,1205.2 L90.9,1197.1 M76.8,1205.2 L70.4,1190.1"/>
</g>
<use href="#ms" y="52"/>
</svg>

<div id="tog"></div>
<svg class="ic" style="left:430px;top:835px" width="66" height="68" viewBox="430 835 66 68" fill="none" stroke="#222" stroke-width="2.1">
<path d="M444.5,854.4 L450,859.8 L455.5,854.4" stroke-linecap="round" stroke-linejoin="round"/>
<path d="M460.2,855.8 H480 M450,863.2 V889 M454.1,866 H480 M454.1,876 H480 M454.1,886 H480"/>
</svg>

<div id="tip"><div class="h"></div>
<span class="t" style="left:9px;top:13.39px;font-size:23px;line-height:26.43px;color:#333;font-weight:bold;transform:scaleX(0.9644);">Boolean</span>
<span class="t" style="left:8.5px;top:65.19px;font-size:23px;line-height:26.43px;color:#333;transform:scaleX(1.0372);">Perform a union, subtraction, or intersection on two or more parts or</span>
<span class="t" style="left:8.5px;top:101.19px;font-size:23px;line-height:26.43px;color:#333;transform:scaleX(1.0181);">surfaces.</span>
</div>
</body>
</html>
